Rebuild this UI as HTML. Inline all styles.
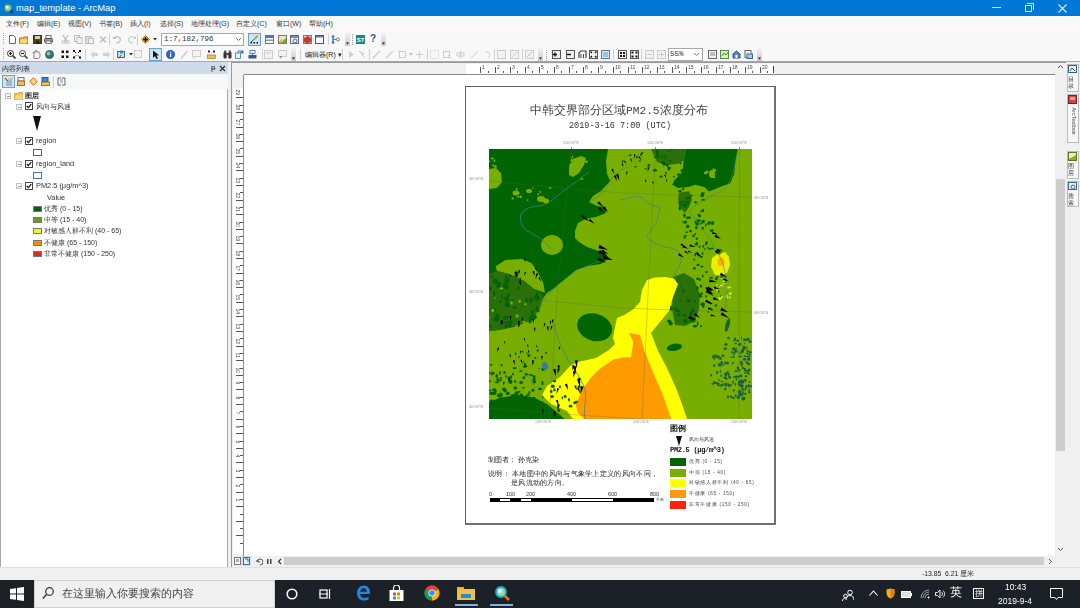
<!DOCTYPE html>
<html><head><meta charset="utf-8"><style>
*{margin:0;padding:0;box-sizing:border-box}
html,body{width:1080px;height:608px;overflow:hidden;background:#f0f0f0;font-family:"Liberation Sans",sans-serif;position:relative}
.a{position:absolute}
.t{white-space:nowrap;line-height:1}
</style></head><body>
<div class="a" style="left:0;top:0;width:1080px;height:608px;overflow:hidden;filter:blur(0.4px)">
<div class="a" style="left:0px;top:0px;width:1080px;height:16px;background:#0078d7"></div>
<svg class="a" style="left:3px;top:3px" width="11" height="11" viewBox="0 0 11 11"><circle cx="5" cy="5" r="4.5" fill="#3b8a6e"/><circle cx="5" cy="5" r="3" fill="#8fd0b0"/><circle cx="4" cy="4" r="1.5" fill="#e8f4ff"/><rect x="7" y="7" width="3" height="4" fill="#1a4d80" transform="rotate(-45 8.5 9)"/></svg>
<div class="a t" style="left:16px;top:3px;color:#fff;font-size:9.4px">map_template - ArcMap</div>
<div class="a" style="left:992px;top:7px;width:9px;height:1px;background:rgba(255,255,255,0.8)"></div>
<div class="a" style="left:1025px;top:5px;width:7px;height:7px;border:1px solid rgba(255,255,255,0.8)"></div>
<div class="a" style="left:1027px;top:3px;width:7px;height:7px;border-top:1px solid rgba(255,255,255,0.8);border-right:1px solid rgba(255,255,255,0.8)"></div>
<svg class="a" style="left:1058px;top:4px" width="9" height="9" viewBox="0 0 9 9"><path d="M0.5 0.5L8.5 8.5M8.5 0.5L0.5 8.5" stroke="rgba(255,255,255,0.85)" stroke-width="1.1"/></svg>
<div class="a" style="left:0px;top:16px;width:1080px;height:15px;background:#f9f9f9"></div>
<div class="a t" style="left:6px;top:20px;font-size:7px;color:#333">文件(F)</div>
<div class="a t" style="left:37px;top:20px;font-size:7px;color:#333">编辑(E)</div>
<div class="a t" style="left:68px;top:20px;font-size:7px;color:#333">视图(V)</div>
<div class="a t" style="left:99px;top:20px;font-size:7px;color:#333">书签(B)</div>
<div class="a t" style="left:130px;top:20px;font-size:7px;color:#333">插入(I)</div>
<div class="a t" style="left:160px;top:20px;font-size:7px;color:#333">选择(S)</div>
<div class="a t" style="left:191px;top:20px;font-size:7px;color:#333">地理处理(G)</div>
<div class="a t" style="left:236px;top:20px;font-size:7px;color:#333">自定义(C)</div>
<div class="a t" style="left:276px;top:20px;font-size:7px;color:#333">窗口(W)</div>
<div class="a t" style="left:309px;top:20px;font-size:7px;color:#333">帮助(H)</div>
<div class="a" style="left:0px;top:31px;width:1080px;height:31px;background:#f8f8f8"></div>
<div class="a" style="left:0px;top:61px;width:1080px;height:1px;background:#a8a8a8"></div>
<div class="a" style="left:3px;top:33px;width:1px;height:1px;background:#a8a8a8"></div>
<div class="a" style="left:3px;top:35px;width:1px;height:1px;background:#a8a8a8"></div>
<div class="a" style="left:3px;top:37px;width:1px;height:1px;background:#a8a8a8"></div>
<div class="a" style="left:3px;top:39px;width:1px;height:1px;background:#a8a8a8"></div>
<div class="a" style="left:3px;top:41px;width:1px;height:1px;background:#a8a8a8"></div>
<div class="a" style="left:3px;top:43px;width:1px;height:1px;background:#a8a8a8"></div>
<div class="a" style="left:3px;top:48px;width:1px;height:1px;background:#a8a8a8"></div>
<div class="a" style="left:3px;top:50px;width:1px;height:1px;background:#a8a8a8"></div>
<div class="a" style="left:3px;top:52px;width:1px;height:1px;background:#a8a8a8"></div>
<div class="a" style="left:3px;top:54px;width:1px;height:1px;background:#a8a8a8"></div>
<div class="a" style="left:3px;top:56px;width:1px;height:1px;background:#a8a8a8"></div>
<div class="a" style="left:3px;top:58px;width:1px;height:1px;background:#a8a8a8"></div>
<svg class="a" style="left:8px;top:35px" width="9" height="9" viewBox="0 0 9 9"><path d="M1.5 0.5H5.5L7.5 2.5V8.5H1.5Z" fill="#fff" stroke="#666"/></svg>
<svg class="a" style="left:19px;top:35px" width="9" height="9" viewBox="0 0 9 9"><path d="M0.5 3H4L5 2H8.5V8.5H0.5Z" fill="#e8c440" stroke="#a07c10"/><path d="M0.5 8.5L2 4.5H9L7.5 8.5Z" fill="#f5dc6a"/></svg>
<svg class="a" style="left:33px;top:35px" width="9" height="9" viewBox="0 0 9 9"><rect x="0.5" y="0.5" width="8" height="8" fill="#5a4a20" stroke="#3a3010"/><rect x="2" y="1" width="5" height="3" fill="#d8d0a0"/><rect x="3" y="5.5" width="3" height="3" fill="#222"/></svg>
<svg class="a" style="left:44px;top:35px" width="9" height="9" viewBox="0 0 9 9"><rect x="2" y="0.5" width="5" height="3" fill="#fff" stroke="#777"/><rect x="0.5" y="3.5" width="8" height="4" rx="1" fill="#9a9a9a" stroke="#555"/><rect x="2" y="6" width="5" height="2.5" fill="#fff" stroke="#777"/></svg>
<svg class="a" style="left:61px;top:35px" width="9" height="9" viewBox="0 0 9 9"><path d="M2 0L5 6M7 0L4 6" stroke="#bbb" stroke-width="1.2"/><circle cx="2.5" cy="7" r="1.5" fill="none" stroke="#bbb"/><circle cx="6.5" cy="7" r="1.5" fill="none" stroke="#bbb"/></svg>
<svg class="a" style="left:74px;top:35px" width="9" height="9" viewBox="0 0 9 9"><rect x="0.5" y="0.5" width="5" height="6" fill="#f4f4f4" stroke="#bbb"/><rect x="3" y="2.5" width="5" height="6" fill="#f4f4f4" stroke="#bbb"/></svg>
<svg class="a" style="left:85px;top:35px" width="9" height="9" viewBox="0 0 9 9"><rect x="0.5" y="1.5" width="6" height="7" fill="#ddd" stroke="#bbb"/><rect x="3.5" y="3.5" width="5" height="5" fill="#f4f4f4" stroke="#bbb"/></svg>
<svg class="a" style="left:99px;top:35px" width="9" height="9" viewBox="0 0 9 9"><path d="M1 1.5L7 7.5M7 1.5L1 7.5" stroke="#bbb" stroke-width="1.3"/></svg>
<div class="a" style="left:109px;top:34px;width:1px;height:11px;background:#d0d0d0"></div>
<svg class="a" style="left:113px;top:35px" width="9" height="9" viewBox="0 0 9 9"><path d="M1.5 3.5A3 3 0 1 1 3 7.5" fill="none" stroke="#bbb" stroke-width="1.2"/><path d="M0 1L3 4H0Z" fill="#bbb"/></svg>
<svg class="a" style="left:127px;top:35px" width="9" height="9" viewBox="0 0 9 9"><path d="M7.5 3.5A3 3 0 1 0 6 7.5" fill="none" stroke="#ccc" stroke-width="1.2"/><path d="M9 1L6 4H9Z" fill="#ccc"/></svg>
<div class="a" style="left:137px;top:34px;width:1px;height:11px;background:#d0d0d0"></div>
<svg class="a" style="left:141px;top:35px" width="9" height="9" viewBox="0 0 9 9"><path d="M4.5 0.5L8.5 4.5L4.5 8.5L0.5 4.5Z" fill="#e8c060" stroke="#b08830"/><path d="M4.5 2V7M2 4.5H7" stroke="#111" stroke-width="1.6"/></svg>
<svg class="a" style="left:153px;top:38px" width="4" height="3" viewBox="0 0 4 3"><path d="M0 0H4L2 2.5Z" fill="#333"/></svg>
<div class="a" style="left:161px;top:33px;width:83px;height:13px;background:#fff;border:1px solid #a8a8a8"></div>
<div class="a t" style="left:164px;top:36px;font-family:'Liberation Mono',monospace;font-size:7.5px;color:#333">1:7,182,796</div>
<svg class="a" style="left:235px;top:37px" width="7" height="5" viewBox="0 0 7 5"><path d="M1 1L3.5 3.5L6 1" fill="none" stroke="#777"/></svg>
<div class="a" style="left:248px;top:33px;width:13px;height:13px;background:#cde4f7;border:1px solid #62a3e0"></div>
<svg class="a" style="left:250px;top:35px" width="9" height="9" viewBox="0 0 9 9"><path d="M1 7L8 1" stroke="#2a7a2a" stroke-width="1"/><path d="M5 2L8 0.5" stroke="#e8b040" stroke-width="1.5"/><rect x="0.5" y="7" width="1.5" height="1.5" fill="#111"/><rect x="3.5" y="7" width="1.5" height="1.5" fill="#111"/><rect x="6.5" y="7" width="1.5" height="1.5" fill="#111"/></svg>
<svg class="a" style="left:265px;top:35px" width="9" height="9" viewBox="0 0 9 9"><rect x="0.5" y="0.5" width="8" height="8" fill="#fff" stroke="#5577aa"/><rect x="1" y="1" width="7" height="2" fill="#4a78b8"/><rect x="1" y="4.5" width="7" height="1.5" fill="#7a9ac8"/></svg>
<svg class="a" style="left:278px;top:35px" width="9" height="9" viewBox="0 0 9 9"><rect x="0.5" y="0.5" width="8" height="8" fill="#e8e8c0" stroke="#777"/><path d="M2 8L8 3V8Z" fill="#7ab020"/><path d="M1 8L4 4" stroke="#c0a020"/></svg>
<svg class="a" style="left:290px;top:35px" width="9" height="9" viewBox="0 0 9 9"><rect x="0.5" y="0.5" width="8" height="8" fill="#eef" stroke="#667"/><rect x="1" y="1" width="7" height="2" fill="#889"/><circle cx="5" cy="6" r="2" fill="none" stroke="#3a7aa0"/></svg>
<svg class="a" style="left:303px;top:35px" width="9" height="9" viewBox="0 0 9 9"><rect x="0.5" y="0.5" width="8" height="8" fill="#e8d0d0" stroke="#777"/><path d="M1 3L5 1L8 3V7L4 8.5L1 7Z" fill="#c83a30"/></svg>
<svg class="a" style="left:315px;top:35px" width="9" height="9" viewBox="0 0 9 9"><rect x="0.5" y="0.5" width="8" height="8" fill="#fff" stroke="#3a5a8a"/><rect x="1" y="1" width="7" height="1.5" fill="#5a7ab0"/></svg>
<div class="a" style="left:328px;top:34px;width:1px;height:11px;background:#d0d0d0"></div>
<svg class="a" style="left:331px;top:35px" width="9" height="9" viewBox="0 0 9 9"><path d="M2 0.5V8.5" stroke="#3a7ad0" stroke-width="1.5"/><path d="M2 4.5H6" stroke="#777"/><circle cx="7" cy="4.5" r="1.5" fill="none" stroke="#777"/><circle cx="2" cy="1.5" r="1.3" fill="#3a7ad0"/><circle cx="2" cy="7.5" r="1.3" fill="#3a7ad0"/></svg>
<div class="a" style="left:345px;top:33px;width:5px;height:13px;background:linear-gradient(#f4f4f4,#c8c8c8)"></div>
<svg class="a" style="left:345px;top:42px" width="5" height="3" viewBox="0 0 5 3"><path d="M1 0.5L4 0.5L2.5 2.5Z" fill="#222"/></svg>
<div class="a" style="left:352px;top:34px;width:1px;height:1px;background:#999"></div>
<div class="a" style="left:352px;top:36px;width:1px;height:1px;background:#999"></div>
<div class="a" style="left:352px;top:38px;width:1px;height:1px;background:#999"></div>
<div class="a" style="left:352px;top:40px;width:1px;height:1px;background:#999"></div>
<div class="a" style="left:352px;top:42px;width:1px;height:1px;background:#999"></div>
<div class="a" style="left:352px;top:44px;width:1px;height:1px;background:#999"></div>
<svg class="a" style="left:356px;top:35px" width="9" height="9" viewBox="0 0 9 9"><rect x="0" y="0" width="9" height="9" fill="#128a8a"/><text x="4.5" y="7" font-size="6" font-family="Liberation Sans" font-weight="bold" fill="#fff" text-anchor="middle">ST</text></svg>
<div class="a t" style="left:370px;top:34px;font-size:10px;font-weight:bold;color:#2a5aa0">?</div>
<div class="a" style="left:381px;top:33px;width:5px;height:13px;background:linear-gradient(#f4f4f4,#c8c8c8)"></div>
<svg class="a" style="left:381px;top:42px" width="5" height="3" viewBox="0 0 5 3"><path d="M1 0.5L4 0.5L2.5 2.5Z" fill="#222"/></svg>
<svg class="a" style="left:7px;top:50px" width="9" height="9" viewBox="0 0 9 9"><circle cx="3.5" cy="3.5" r="3" fill="#fff" stroke="#333"/><path d="M2 3.5H5M3.5 2V5" stroke="#111"/><path d="M5.5 5.5L8.5 8.5" stroke="#333" stroke-width="1.6"/></svg>
<svg class="a" style="left:19px;top:50px" width="9" height="9" viewBox="0 0 9 9"><circle cx="3.5" cy="3.5" r="3" fill="#fff" stroke="#444"/><path d="M2 3.5H5" stroke="#111"/><path d="M5.5 5.5L8.5 8.5" stroke="#444" stroke-width="1.6"/></svg>
<svg class="a" style="left:32px;top:50px" width="9" height="9" viewBox="0 0 9 9"><path d="M2 8.5V4L1 2.5L2 2L3 3V1L4 0.5L5 1V2.5L6 1.5L7 2L8 4V7L6.5 8.5Z" fill="#f4f4f4" stroke="#666" stroke-width="0.8"/></svg>
<svg class="a" style="left:45px;top:50px" width="9" height="9" viewBox="0 0 9 9"><circle cx="4.5" cy="4.5" r="4" fill="#3a7a50"/><circle cx="3.5" cy="3.5" r="2" fill="#7ac0e0"/><circle cx="4.5" cy="4.5" r="4" fill="none" stroke="#2a5070" stroke-width="0.8"/></svg>
<svg class="a" style="left:61px;top:50px" width="9" height="9" viewBox="0 0 9 9"><rect x="0.5" y="0.5" width="2.5" height="2.5" fill="#111"/><rect x="5" y="0.5" width="2.5" height="2.5" fill="#111"/><rect x="0.5" y="5.5" width="2.5" height="2.5" fill="#111"/><rect x="5" y="5.5" width="2.5" height="2.5" fill="#111"/></svg>
<svg class="a" style="left:73px;top:50px" width="9" height="9" viewBox="0 0 9 9"><rect x="0" y="0" width="2" height="2" fill="#111"/><rect x="6" y="0" width="2" height="2" fill="#111"/><rect x="0" y="6.5" width="2" height="2" fill="#111"/><rect x="6" y="6.5" width="2" height="2" fill="#111"/><path d="M2 2L3 3M6 2L5 3M2 6.5L3 5.5M6 6.5L5 5.5" stroke="#111"/></svg>
<div class="a" style="left:85px;top:49px;width:1px;height:11px;background:#d0d0d0"></div>
<svg class="a" style="left:90px;top:50px" width="9" height="9" viewBox="0 0 9 9"><path d="M0.5 4.5L4 1V3H8V6H4V8Z" fill="#d0d4d8"/></svg>
<svg class="a" style="left:102px;top:50px" width="9" height="9" viewBox="0 0 9 9"><path d="M8.5 4.5L5 1V3H1V6H5V8Z" fill="#d0d4d8"/></svg>
<div class="a" style="left:113px;top:49px;width:1px;height:11px;background:#d0d0d0"></div>
<svg class="a" style="left:117px;top:50px" width="9" height="9" viewBox="0 0 9 9"><rect x="0.5" y="1.5" width="7" height="6" fill="#cfe0ee" stroke="#3a6a9a"/><rect x="3" y="0.5" width="3" height="3" fill="#3a8ab0"/><path d="M2 8.5L4 5" stroke="#555"/></svg>
<svg class="a" style="left:129px;top:53px" width="4" height="3" viewBox="0 0 4 3"><path d="M0 0H4L2 2.5Z" fill="#333"/></svg>
<svg class="a" style="left:134px;top:50px" width="9" height="9" viewBox="0 0 9 9"><rect x="0.5" y="0.5" width="7" height="7" fill="#f2f2f2" stroke="#ccc"/></svg>
<div class="a" style="left:149px;top:48px;width:13px;height:13px;background:#cde4f7;border:1px solid #62a3e0"></div>
<svg class="a" style="left:151px;top:50px" width="9" height="9" viewBox="0 0 9 9"><path d="M2 0.5L2 8L4 6L5.5 9L7 8.3L5.5 5.5L8 5.2Z" fill="#111"/></svg>
<svg class="a" style="left:166px;top:50px" width="9" height="9" viewBox="0 0 9 9"><circle cx="4.5" cy="4.5" r="4.2" fill="#2a6ad0"/><circle cx="4.5" cy="4.5" r="4.2" fill="none" stroke="#1a4a90" stroke-width="0.6"/><rect x="4" y="3.5" width="1.2" height="3.5" fill="#fff"/><rect x="4" y="1.8" width="1.2" height="1" fill="#fff"/></svg>
<svg class="a" style="left:180px;top:50px" width="9" height="9" viewBox="0 0 9 9"><path d="M1 8.5L7.5 1" stroke="#ccc" stroke-width="1.5"/></svg>
<svg class="a" style="left:192px;top:50px" width="9" height="9" viewBox="0 0 9 9"><rect x="0.5" y="0.5" width="8" height="6" fill="#f4f4f4" stroke="#ccc"/><path d="M2 6.5V8.5L4 6.5" fill="#f4f4f4" stroke="#ccc"/></svg>
<svg class="a" style="left:207px;top:50px" width="9" height="9" viewBox="0 0 9 9"><rect x="0.5" y="5" width="8" height="3.5" fill="#f0c040" stroke="#8a6a10" stroke-width="0.6"/><rect x="1" y="0.5" width="2" height="2" fill="#224"/><rect x="6" y="0.5" width="2" height="2" fill="#224"/></svg>
<svg class="a" style="left:223px;top:50px" width="9" height="9" viewBox="0 0 9 9"><rect x="0.5" y="2" width="3.2" height="6.5" rx="1" fill="#333"/><rect x="5.3" y="2" width="3.2" height="6.5" rx="1" fill="#333"/><rect x="1" y="0.5" width="2.2" height="2" fill="#555"/><rect x="5.8" y="0.5" width="2.2" height="2" fill="#555"/><rect x="3.5" y="3" width="2" height="2" fill="#333"/></svg>
<svg class="a" style="left:235px;top:50px" width="9" height="9" viewBox="0 0 9 9"><rect x="0.5" y="3" width="5" height="5.5" fill="#e8f0f8" stroke="#3a7ab0" stroke-width="0.8"/><rect x="5.5" y="0.5" width="3" height="3" fill="#3a7ab0"/><path d="M3 3V1H5.5" fill="none" stroke="#3a7ab0"/></svg>
<svg class="a" style="left:248px;top:50px" width="9" height="9" viewBox="0 0 9 9"><rect x="2" y="0.5" width="5" height="3" fill="#e8f0f8" stroke="#3a6ab0" stroke-width="0.8"/><path d="M4.5 3.5V5" stroke="#666"/><rect x="0.5" y="5" width="8" height="3.5" fill="#2a5aa0"/></svg>
<div class="a" style="left:262px;top:49px;width:1px;height:11px;background:#d0d0d0"></div>
<svg class="a" style="left:264px;top:50px" width="9" height="9" viewBox="0 0 9 9"><rect x="0.5" y="0.5" width="8" height="8" fill="#f2f2f2" stroke="#ccc"/><rect x="2" y="2" width="5" height="2" fill="#ddd"/></svg>
<svg class="a" style="left:278px;top:50px" width="9" height="9" viewBox="0 0 9 9"><rect x="0.5" y="0.5" width="8" height="6" fill="#f2f2f2" stroke="#ccc"/><path d="M2 6.5V8.5L4 6.5" stroke="#ccc"/></svg>
<div class="a" style="left:291px;top:48px;width:5px;height:13px;background:linear-gradient(#f4f4f4,#c8c8c8)"></div>
<svg class="a" style="left:291px;top:57px" width="5" height="3" viewBox="0 0 5 3"><path d="M1 0.5L4 0.5L2.5 2.5Z" fill="#222"/></svg>
<div class="a" style="left:300px;top:49px;width:1px;height:11px;background:#d0d0d0"></div>
<div class="a t" style="left:305px;top:51px;font-size:7px;color:#222">编辑器(R) ▾</div>
<div class="a" style="left:342px;top:49px;width:1px;height:11px;background:#d0d0d0"></div>
<svg class="a" style="left:347px;top:50px" width="9" height="9" viewBox="0 0 9 9"><path d="M2 1L7 4.5L2 8Z" fill="#cfcfcf"/></svg>
<svg class="a" style="left:358px;top:50px" width="9" height="9" viewBox="0 0 9 9"><path d="M1 1L6 4L4 5L7 8" fill="#cfcfcf" stroke="#cfcfcf"/></svg>
<div class="a" style="left:369px;top:49px;width:1px;height:11px;background:#d0d0d0"></div>
<svg class="a" style="left:372px;top:50px" width="9" height="9" viewBox="0 0 9 9"><path d="M1 8L8 1" stroke="#ccc" stroke-width="1.2"/><circle cx="1.5" cy="7.5" r="1" fill="#ccc"/></svg>
<svg class="a" style="left:385px;top:50px" width="9" height="9" viewBox="0 0 9 9"><path d="M1 8L8 1" stroke="#ccc" stroke-width="1.2"/></svg>
<svg class="a" style="left:398px;top:50px" width="9" height="9" viewBox="0 0 9 9"><rect x="1.5" y="1.5" width="6" height="6" fill="none" stroke="#ccc"/><circle cx="1.5" cy="1.5" r="1" fill="#ccc"/></svg>
<svg class="a" style="left:409px;top:53px" width="4" height="3" viewBox="0 0 4 3"><path d="M0 0H4L2 2.5Z" fill="#bbb"/></svg>
<svg class="a" style="left:415px;top:50px" width="9" height="9" viewBox="0 0 9 9"><path d="M1 4.5H8M4.5 1V8" stroke="#ccc"/></svg>
<div class="a" style="left:427px;top:49px;width:1px;height:11px;background:#d0d0d0"></div>
<svg class="a" style="left:430px;top:50px" width="9" height="9" viewBox="0 0 9 9"><rect x="0.5" y="0.5" width="8" height="8" fill="none" stroke="#ccc" stroke-dasharray="1 1"/></svg>
<svg class="a" style="left:443px;top:50px" width="9" height="9" viewBox="0 0 9 9"><rect x="0.5" y="1.5" width="6" height="6" fill="none" stroke="#ccc"/><path d="M5 5L8.5 8.5" stroke="#ccc"/></svg>
<svg class="a" style="left:456px;top:50px" width="9" height="9" viewBox="0 0 9 9"><path d="M4.5 0.5V8.5M1 3H8V6H1Z" fill="none" stroke="#ccc"/></svg>
<svg class="a" style="left:470px;top:50px" width="9" height="9" viewBox="0 0 9 9"><path d="M1 8L8 1" stroke="#ccc"/></svg>
<svg class="a" style="left:483px;top:50px" width="9" height="9" viewBox="0 0 9 9"><path d="M2 2A3 3 0 1 1 5 8" fill="none" stroke="#ccc"/></svg>
<div class="a" style="left:494px;top:49px;width:1px;height:11px;background:#d0d0d0"></div>
<svg class="a" style="left:497px;top:50px" width="9" height="9" viewBox="0 0 9 9"><rect x="0.5" y="0.5" width="8" height="8" fill="#f2f2f2" stroke="#ccc"/></svg>
<svg class="a" style="left:510px;top:50px" width="9" height="9" viewBox="0 0 9 9"><rect x="0.5" y="0.5" width="8" height="8" fill="#f2f2f2" stroke="#ccc"/><path d="M2 7L7 2" stroke="#ccc"/></svg>
<div class="a" style="left:522px;top:49px;width:1px;height:11px;background:#d0d0d0"></div>
<svg class="a" style="left:525px;top:50px" width="9" height="9" viewBox="0 0 9 9"><rect x="0.5" y="0.5" width="8" height="8" fill="#f2f2f2" stroke="#ccc"/><path d="M2 7L7 2" stroke="#bbb"/></svg>
<div class="a" style="left:538px;top:48px;width:5px;height:13px;background:linear-gradient(#f4f4f4,#c8c8c8)"></div>
<svg class="a" style="left:538px;top:57px" width="5" height="3" viewBox="0 0 5 3"><path d="M1 0.5L4 0.5L2.5 2.5Z" fill="#222"/></svg>
<div class="a" style="left:546px;top:50px;width:1px;height:1px;background:#999"></div>
<div class="a" style="left:546px;top:52px;width:1px;height:1px;background:#999"></div>
<div class="a" style="left:546px;top:54px;width:1px;height:1px;background:#999"></div>
<div class="a" style="left:546px;top:56px;width:1px;height:1px;background:#999"></div>
<div class="a" style="left:546px;top:58px;width:1px;height:1px;background:#999"></div>
<div class="a" style="left:546px;top:60px;width:1px;height:1px;background:#999"></div>
<svg class="a" style="left:552px;top:50px" width="9" height="9" viewBox="0 0 9 9"><rect x="0.5" y="0.5" width="8" height="8" fill="#eee" stroke="#555"/><path d="M1 4.5H5M3 2.5V6.5" stroke="#111" stroke-width="1.4"/></svg>
<svg class="a" style="left:566px;top:50px" width="9" height="9" viewBox="0 0 9 9"><rect x="0.5" y="0.5" width="8" height="8" fill="#eee" stroke="#555"/><path d="M1 4.5H5" stroke="#111" stroke-width="1.4"/></svg>
<svg class="a" style="left:578px;top:50px" width="9" height="9" viewBox="0 0 9 9"><path d="M1 8V3L3 1H8V8" fill="none" stroke="#444" stroke-width="1.2"/><path d="M3 4V8M5.5 4V8" stroke="#444"/></svg>
<svg class="a" style="left:589px;top:50px" width="9" height="9" viewBox="0 0 9 9"><rect x="0.5" y="0.5" width="8" height="8" fill="#f4f4f4" stroke="#555"/><path d="M1.5 1.5L3 3M7.5 1.5L6 3M1.5 7.5L3 6M7.5 7.5L6 6" stroke="#111" stroke-width="1.3"/></svg>
<svg class="a" style="left:601px;top:50px" width="9" height="9" viewBox="0 0 9 9"><rect x="0.5" y="0.5" width="8" height="8" fill="#dde8f4" stroke="#5a7aa0"/><rect x="2" y="2" width="5" height="5" fill="#a0c0e0"/></svg>
<div class="a" style="left:613px;top:49px;width:1px;height:11px;background:#d0d0d0"></div>
<svg class="a" style="left:618px;top:50px" width="9" height="9" viewBox="0 0 9 9"><rect x="0.5" y="0.5" width="8" height="8" fill="#f4f4f4" stroke="#555"/><rect x="2" y="2" width="2" height="2" fill="#111"/><rect x="5" y="2" width="2" height="2" fill="#111"/><rect x="2" y="5" width="2" height="2" fill="#111"/><rect x="5" y="5" width="2" height="2" fill="#111"/></svg>
<svg class="a" style="left:630px;top:50px" width="9" height="9" viewBox="0 0 9 9"><rect x="0.5" y="0.5" width="8" height="8" fill="#f4f4f4" stroke="#555"/><rect x="1.5" y="1.5" width="2" height="2" fill="#111"/><rect x="5.5" y="1.5" width="2" height="2" fill="#111"/><rect x="1.5" y="5.5" width="2" height="2" fill="#111"/><rect x="5.5" y="5.5" width="2" height="2" fill="#111"/></svg>
<div class="a" style="left:641px;top:49px;width:1px;height:11px;background:#d0d0d0"></div>
<svg class="a" style="left:645px;top:50px" width="9" height="9" viewBox="0 0 9 9"><rect x="0.5" y="0.5" width="8" height="8" fill="#f2f2f2" stroke="#ccc"/><path d="M2 4.5H7" stroke="#ccc"/></svg>
<svg class="a" style="left:657px;top:50px" width="9" height="9" viewBox="0 0 9 9"><rect x="0.5" y="0.5" width="8" height="8" fill="#f2f2f2" stroke="#ccc"/><path d="M2 4.5H7M4.5 2V7" stroke="#ccc"/></svg>
<div class="a" style="left:668px;top:48px;width:35px;height:13px;background:#fff;border:1px solid #a8a8a8"></div>
<div class="a t" style="left:670px;top:51px;font-family:'Liberation Mono',monospace;font-size:7.5px;color:#333">55%</div>
<svg class="a" style="left:693px;top:52px" width="7" height="5" viewBox="0 0 7 5"><path d="M1 1L3.5 3.5L6 1" fill="none" stroke="#777"/></svg>
<svg class="a" style="left:708px;top:50px" width="9" height="9" viewBox="0 0 9 9"><rect x="0.5" y="0.5" width="8" height="8" fill="#f4f4f4" stroke="#666"/><path d="M2 3H7M2 5H7" stroke="#888"/></svg>
<svg class="a" style="left:720px;top:50px" width="9" height="9" viewBox="0 0 9 9"><rect x="0.5" y="0.5" width="8" height="8" fill="#d8ecd0" stroke="#5a8a4a"/><path d="M2 6L4 3L6 5L8 2" stroke="#3a8a2a" fill="none"/></svg>
<svg class="a" style="left:732px;top:50px" width="9" height="9" viewBox="0 0 9 9"><path d="M1 8V4L4.5 1L8 4V8Z" fill="#5a8ac0" stroke="#2a4a80"/><rect x="3.5" y="5" width="2" height="3" fill="#fff"/></svg>
<svg class="a" style="left:744px;top:50px" width="9" height="9" viewBox="0 0 9 9"><rect x="1" y="0.5" width="6" height="7" fill="#f4f4f4" stroke="#666"/><rect x="3" y="4" width="5.5" height="4.5" fill="#a8c8e8" stroke="#3a6aa0"/></svg>
<div class="a" style="left:757px;top:48px;width:5px;height:13px;background:linear-gradient(#f4f4f4,#c8c8c8)"></div>
<svg class="a" style="left:757px;top:57px" width="5" height="3" viewBox="0 0 5 3"><path d="M1 0.5L4 0.5L2.5 2.5Z" fill="#222"/></svg>
<div class="a" style="left:0px;top:62px;width:228px;height:12px;background:#cfdbea"></div>
<div class="a t" style="left:2px;top:65px;font-size:7px;color:#222">内容列表</div>
<div class="a t" style="left:211px;top:64px;font-size:8px;color:#333">ᵽ</div>
<svg class="a" style="left:219px;top:65px" width="7" height="7" viewBox="0 0 7 7"><path d="M1 1L6 6M6 1L1 6" stroke="#333" stroke-width="1.2"/></svg>
<div class="a" style="left:0px;top:74px;width:228px;height:15px;background:#f7f8f9"></div>
<div class="a" style="left:2px;top:75px;width:13px;height:13px;background:#cde4f7;border:1px solid #62a3e0"></div>
<svg class="a" style="left:4px;top:77px" width="9" height="9" viewBox="0 0 9 9"><path d="M0 2H3M4 2H9" stroke="#e0b040"/><path d="M2 4H8M2 6H8M2 8H8" stroke="#888"/><path d="M1 1L4 4" stroke="#444"/></svg>
<svg class="a" style="left:17px;top:77px" width="9" height="9" viewBox="0 0 9 9"><rect x="1" y="0.5" width="6" height="3.5" fill="#f4f4f4" stroke="#777"/><rect x="0.5" y="4" width="7" height="4.5" fill="#e8c060" stroke="#a07820"/></svg>
<svg class="a" style="left:29px;top:77px" width="9" height="9" viewBox="0 0 9 9"><path d="M4.5 0.5L8.5 4.5L4.5 8.5L0.5 4.5Z" fill="#f0c060" stroke="#c09040"/><path d="M4.5 2.5L6.5 4.5L4.5 6.5L2.5 4.5Z" fill="#f8e0a0"/></svg>
<svg class="a" style="left:41px;top:77px" width="9" height="9" viewBox="0 0 9 9"><rect x="1" y="0.5" width="6" height="4" fill="#3a8ad0" stroke="#2a5a90"/><rect x="0.5" y="5" width="8" height="3.5" fill="#e8c060" stroke="#a07820"/></svg>
<div class="a" style="left:53px;top:76px;width:1px;height:12px;background:#d0d0d0"></div>
<svg class="a" style="left:57px;top:77px" width="9" height="9" viewBox="0 0 9 9"><path d="M1 1H4M1 1V8M1 8H4M8 1H5M8 1V8M8 8H5" fill="none" stroke="#666"/><path d="M3 3H6M3 5H6" stroke="#888"/></svg>
<div class="a" style="left:0;top:89px;width:228px;height:479px;background:#fff;border:1px solid #a9a9a9;border-top:0"></div>
<div class="a" style="left:5px;top:93px;width:6px;height:6px;border:1px solid #c0c0c0;background:#fafafa"></div>
<div class="a" style="left:6.5px;top:95.5px;width:3px;height:1px;background:#999"></div>
<svg class="a" style="left:14px;top:91px" width="9" height="9" viewBox="0 0 9 9"><path d="M0.5 2.5H3.5L4.5 1.5H8.5V8.5H0.5Z" fill="#f2c250" stroke="#d09a30" stroke-width="0.8"/><path d="M1 8.5L2 4H9L8 8.5Z" fill="#f8d878"/></svg>
<div class="a t" style="left:25px;top:92px;font-size:7px;color:#222;font-weight:bold">图层</div>
<div class="a" style="left:16px;top:104px;width:6px;height:6px;border:1px solid #c0c0c0;background:#fafafa"></div>
<div class="a" style="left:17.5px;top:106.5px;width:3px;height:1px;background:#999"></div>
<div class="a" style="left:25px;top:102px;width:8px;height:8px;border:1px solid #444;background:#fff"></div>
<svg class="a" style="left:25px;top:102px" width="8" height="8" viewBox="0 0 8 8"><path d="M1.8 4L3.3 5.6L6.3 2.2" fill="none" stroke="#111" stroke-width="1.2"/></svg>
<div class="a t" style="left:36px;top:103px;font-size:7px;color:#333">风向与风速</div>
<svg class="a" style="left:33px;top:116px" width="8" height="15" viewBox="0 0 8 15"><path d="M0 0H8L4 15Z" fill="#111"/></svg>
<div class="a" style="left:16px;top:138px;width:6px;height:6px;border:1px solid #c0c0c0;background:#fafafa"></div>
<div class="a" style="left:17.5px;top:140.5px;width:3px;height:1px;background:#999"></div>
<div class="a" style="left:25px;top:137px;width:8px;height:8px;border:1px solid #444;background:#fff"></div>
<svg class="a" style="left:25px;top:137px" width="8" height="8" viewBox="0 0 8 8"><path d="M1.8 4L3.3 5.6L6.3 2.2" fill="none" stroke="#111" stroke-width="1.2"/></svg>
<div class="a t" style="left:36px;top:137px;font-size:7.3px;color:#333">region</div>
<div class="a" style="left:33px;top:149px;width:9px;height:7px;border:1.5px solid #e03040;background:#fff"></div>
<div class="a" style="left:16px;top:161px;width:6px;height:6px;border:1px solid #c0c0c0;background:#fafafa"></div>
<div class="a" style="left:17.5px;top:163.5px;width:3px;height:1px;background:#999"></div>
<div class="a" style="left:25px;top:160px;width:8px;height:8px;border:1px solid #444;background:#fff"></div>
<svg class="a" style="left:25px;top:160px" width="8" height="8" viewBox="0 0 8 8"><path d="M1.8 4L3.3 5.6L6.3 2.2" fill="none" stroke="#111" stroke-width="1.2"/></svg>
<div class="a t" style="left:36px;top:160px;font-size:7.3px;color:#333">region_land</div>
<div class="a" style="left:33px;top:172px;width:9px;height:7px;border:1.5px solid #3a70d0;background:#fff"></div>
<div class="a" style="left:16px;top:183px;width:6px;height:6px;border:1px solid #c0c0c0;background:#fafafa"></div>
<div class="a" style="left:17.5px;top:185.5px;width:3px;height:1px;background:#999"></div>
<div class="a" style="left:25px;top:182px;width:8px;height:8px;border:1px solid #444;background:#fff"></div>
<svg class="a" style="left:25px;top:182px" width="8" height="8" viewBox="0 0 8 8"><path d="M1.8 4L3.3 5.6L6.3 2.2" fill="none" stroke="#111" stroke-width="1.2"/></svg>
<div class="a t" style="left:36px;top:182px;font-size:7.4px;color:#333">PM2.5 (μg/m^3)</div>
<div class="a t" style="left:47px;top:194px;font-size:7.3px;color:#333">Value</div>
<div class="a" style="left:33px;top:206.0px;width:9px;height:6px;background:#0d5e0d;border:1px solid #777"></div>
<div class="a t" style="left:44px;top:205.0px;font-size:7px;color:#333">优秀 (0 - 15)</div>
<div class="a" style="left:33px;top:217.2px;width:9px;height:6px;background:#6a9e1a;border:1px solid #777"></div>
<div class="a t" style="left:44px;top:216.2px;font-size:7px;color:#333">中等 (15 - 40)</div>
<div class="a" style="left:33px;top:228.4px;width:9px;height:6px;background:#f4f420;border:1px solid #777"></div>
<div class="a t" style="left:44px;top:227.4px;font-size:7px;color:#333">对敏感人群不利 (40 - 65)</div>
<div class="a" style="left:33px;top:239.6px;width:9px;height:6px;background:#f08c10;border:1px solid #777"></div>
<div class="a t" style="left:44px;top:238.6px;font-size:7px;color:#333">不健康 (65 - 150)</div>
<div class="a" style="left:33px;top:250.8px;width:9px;height:6px;background:#e02a1a;border:1px solid #777"></div>
<div class="a t" style="left:44px;top:249.8px;font-size:7px;color:#333">非常不健康 (150 - 250)</div>
<div class="a" style="left:231px;top:62px;width:836px;height:505px;background:#f0f0f0;border-left:1px solid #9a9a9a;border-top:1px solid #9a9a9a"></div>
<div class="a" style="left:244px;top:75px;width:811px;height:481px;background:#fff"></div>
<div class="a" style="left:466px;top:64px;width:308px;height:10px;background:#fff"></div>
<div class="a" style="left:244px;top:74px;width:811px;height:1px;background:#8a8a8a"></div>
<div class="a" style="left:480px;top:67px;width:1px;height:6px;background:#555"></div>
<div class="a t" style="left:482px;top:65px;font-size:5px;color:#444">1</div>
<div class="a" style="left:488px;top:71px;width:1px;height:2px;background:#555"></div>
<div class="a" style="left:495px;top:67px;width:1px;height:6px;background:#555"></div>
<div class="a t" style="left:497px;top:65px;font-size:5px;color:#444">2</div>
<div class="a" style="left:503px;top:71px;width:1px;height:2px;background:#555"></div>
<div class="a" style="left:510px;top:67px;width:1px;height:6px;background:#555"></div>
<div class="a t" style="left:512px;top:65px;font-size:5px;color:#444">3</div>
<div class="a" style="left:517px;top:71px;width:1px;height:2px;background:#555"></div>
<div class="a" style="left:525px;top:67px;width:1px;height:6px;background:#555"></div>
<div class="a t" style="left:527px;top:65px;font-size:5px;color:#444">4</div>
<div class="a" style="left:532px;top:71px;width:1px;height:2px;background:#555"></div>
<div class="a" style="left:539px;top:67px;width:1px;height:6px;background:#555"></div>
<div class="a t" style="left:541px;top:65px;font-size:5px;color:#444">5</div>
<div class="a" style="left:547px;top:71px;width:1px;height:2px;background:#555"></div>
<div class="a" style="left:554px;top:67px;width:1px;height:6px;background:#555"></div>
<div class="a t" style="left:556px;top:65px;font-size:5px;color:#444">6</div>
<div class="a" style="left:561px;top:71px;width:1px;height:2px;background:#555"></div>
<div class="a" style="left:569px;top:67px;width:1px;height:6px;background:#555"></div>
<div class="a t" style="left:571px;top:65px;font-size:5px;color:#444">7</div>
<div class="a" style="left:576px;top:71px;width:1px;height:2px;background:#555"></div>
<div class="a" style="left:583px;top:67px;width:1px;height:6px;background:#555"></div>
<div class="a t" style="left:585px;top:65px;font-size:5px;color:#444">8</div>
<div class="a" style="left:591px;top:71px;width:1px;height:2px;background:#555"></div>
<div class="a" style="left:598px;top:67px;width:1px;height:6px;background:#555"></div>
<div class="a t" style="left:600px;top:65px;font-size:5px;color:#444">9</div>
<div class="a" style="left:605px;top:71px;width:1px;height:2px;background:#555"></div>
<div class="a" style="left:613px;top:67px;width:1px;height:6px;background:#555"></div>
<div class="a t" style="left:615px;top:65px;font-size:5px;color:#444">10</div>
<div class="a" style="left:620px;top:71px;width:1px;height:2px;background:#555"></div>
<div class="a" style="left:628px;top:67px;width:1px;height:6px;background:#555"></div>
<div class="a t" style="left:630px;top:65px;font-size:5px;color:#444">11</div>
<div class="a" style="left:635px;top:71px;width:1px;height:2px;background:#555"></div>
<div class="a" style="left:642px;top:67px;width:1px;height:6px;background:#555"></div>
<div class="a t" style="left:644px;top:65px;font-size:5px;color:#444">12</div>
<div class="a" style="left:650px;top:71px;width:1px;height:2px;background:#555"></div>
<div class="a" style="left:657px;top:67px;width:1px;height:6px;background:#555"></div>
<div class="a t" style="left:659px;top:65px;font-size:5px;color:#444">13</div>
<div class="a" style="left:664px;top:71px;width:1px;height:2px;background:#555"></div>
<div class="a" style="left:672px;top:67px;width:1px;height:6px;background:#555"></div>
<div class="a t" style="left:674px;top:65px;font-size:5px;color:#444">14</div>
<div class="a" style="left:679px;top:71px;width:1px;height:2px;background:#555"></div>
<div class="a" style="left:686px;top:67px;width:1px;height:6px;background:#555"></div>
<div class="a t" style="left:688px;top:65px;font-size:5px;color:#444">15</div>
<div class="a" style="left:694px;top:71px;width:1px;height:2px;background:#555"></div>
<div class="a" style="left:701px;top:67px;width:1px;height:6px;background:#555"></div>
<div class="a t" style="left:703px;top:65px;font-size:5px;color:#444">16</div>
<div class="a" style="left:708px;top:71px;width:1px;height:2px;background:#555"></div>
<div class="a" style="left:716px;top:67px;width:1px;height:6px;background:#555"></div>
<div class="a t" style="left:718px;top:65px;font-size:5px;color:#444">17</div>
<div class="a" style="left:723px;top:71px;width:1px;height:2px;background:#555"></div>
<div class="a" style="left:730px;top:67px;width:1px;height:6px;background:#555"></div>
<div class="a t" style="left:732px;top:65px;font-size:5px;color:#444">18</div>
<div class="a" style="left:738px;top:71px;width:1px;height:2px;background:#555"></div>
<div class="a" style="left:745px;top:67px;width:1px;height:6px;background:#555"></div>
<div class="a t" style="left:747px;top:65px;font-size:5px;color:#444">19</div>
<div class="a" style="left:752px;top:71px;width:1px;height:2px;background:#555"></div>
<div class="a" style="left:760px;top:67px;width:1px;height:6px;background:#555"></div>
<div class="a t" style="left:762px;top:65px;font-size:5px;color:#444">20</div>
<div class="a" style="left:767px;top:71px;width:1px;height:2px;background:#555"></div>
<div class="a" style="left:773px;top:66px;width:1px;height:7px;background:#444"></div>
<div class="a" style="left:233px;top:88px;width:10px;height:466px;background:#fff"></div>
<div class="a" style="left:243px;top:75px;width:1px;height:481px;background:#8a8a8a"></div>
<div class="a" style="left:236px;top:97px;width:7px;height:1px;background:#555"></div>
<div class="a t" style="left:233px;top:89px;width:6px;height:7px;font-size:5px;color:#444;transform:rotate(90deg);transform-origin:center">29</div>
<div class="a" style="left:240px;top:105px;width:3px;height:1px;background:#555"></div>
<div class="a" style="left:236px;top:112px;width:7px;height:1px;background:#555"></div>
<div class="a t" style="left:233px;top:104px;width:6px;height:7px;font-size:5px;color:#444;transform:rotate(90deg);transform-origin:center">28</div>
<div class="a" style="left:240px;top:119px;width:3px;height:1px;background:#555"></div>
<div class="a" style="left:236px;top:127px;width:7px;height:1px;background:#555"></div>
<div class="a t" style="left:233px;top:119px;width:6px;height:7px;font-size:5px;color:#444;transform:rotate(90deg);transform-origin:center">27</div>
<div class="a" style="left:240px;top:134px;width:3px;height:1px;background:#555"></div>
<div class="a" style="left:236px;top:141px;width:7px;height:1px;background:#555"></div>
<div class="a t" style="left:233px;top:133px;width:6px;height:7px;font-size:5px;color:#444;transform:rotate(90deg);transform-origin:center">26</div>
<div class="a" style="left:240px;top:148px;width:3px;height:1px;background:#555"></div>
<div class="a" style="left:236px;top:156px;width:7px;height:1px;background:#555"></div>
<div class="a t" style="left:233px;top:148px;width:6px;height:7px;font-size:5px;color:#444;transform:rotate(90deg);transform-origin:center">25</div>
<div class="a" style="left:240px;top:163px;width:3px;height:1px;background:#555"></div>
<div class="a" style="left:236px;top:170px;width:7px;height:1px;background:#555"></div>
<div class="a t" style="left:233px;top:162px;width:6px;height:7px;font-size:5px;color:#444;transform:rotate(90deg);transform-origin:center">24</div>
<div class="a" style="left:240px;top:178px;width:3px;height:1px;background:#555"></div>
<div class="a" style="left:236px;top:185px;width:7px;height:1px;background:#555"></div>
<div class="a t" style="left:233px;top:177px;width:6px;height:7px;font-size:5px;color:#444;transform:rotate(90deg);transform-origin:center">23</div>
<div class="a" style="left:240px;top:192px;width:3px;height:1px;background:#555"></div>
<div class="a" style="left:236px;top:200px;width:7px;height:1px;background:#555"></div>
<div class="a t" style="left:233px;top:192px;width:6px;height:7px;font-size:5px;color:#444;transform:rotate(90deg);transform-origin:center">22</div>
<div class="a" style="left:240px;top:207px;width:3px;height:1px;background:#555"></div>
<div class="a" style="left:236px;top:214px;width:7px;height:1px;background:#555"></div>
<div class="a t" style="left:233px;top:206px;width:6px;height:7px;font-size:5px;color:#444;transform:rotate(90deg);transform-origin:center">21</div>
<div class="a" style="left:240px;top:222px;width:3px;height:1px;background:#555"></div>
<div class="a" style="left:236px;top:229px;width:7px;height:1px;background:#555"></div>
<div class="a t" style="left:233px;top:221px;width:6px;height:7px;font-size:5px;color:#444;transform:rotate(90deg);transform-origin:center">20</div>
<div class="a" style="left:240px;top:236px;width:3px;height:1px;background:#555"></div>
<div class="a" style="left:236px;top:243px;width:7px;height:1px;background:#555"></div>
<div class="a t" style="left:233px;top:235px;width:6px;height:7px;font-size:5px;color:#444;transform:rotate(90deg);transform-origin:center">19</div>
<div class="a" style="left:240px;top:251px;width:3px;height:1px;background:#555"></div>
<div class="a" style="left:236px;top:258px;width:7px;height:1px;background:#555"></div>
<div class="a t" style="left:233px;top:250px;width:6px;height:7px;font-size:5px;color:#444;transform:rotate(90deg);transform-origin:center">18</div>
<div class="a" style="left:240px;top:265px;width:3px;height:1px;background:#555"></div>
<div class="a" style="left:236px;top:273px;width:7px;height:1px;background:#555"></div>
<div class="a t" style="left:233px;top:265px;width:6px;height:7px;font-size:5px;color:#444;transform:rotate(90deg);transform-origin:center">17</div>
<div class="a" style="left:240px;top:280px;width:3px;height:1px;background:#555"></div>
<div class="a" style="left:236px;top:287px;width:7px;height:1px;background:#555"></div>
<div class="a t" style="left:233px;top:279px;width:6px;height:7px;font-size:5px;color:#444;transform:rotate(90deg);transform-origin:center">16</div>
<div class="a" style="left:240px;top:294px;width:3px;height:1px;background:#555"></div>
<div class="a" style="left:236px;top:302px;width:7px;height:1px;background:#555"></div>
<div class="a t" style="left:233px;top:294px;width:6px;height:7px;font-size:5px;color:#444;transform:rotate(90deg);transform-origin:center">15</div>
<div class="a" style="left:240px;top:309px;width:3px;height:1px;background:#555"></div>
<div class="a" style="left:236px;top:316px;width:7px;height:1px;background:#555"></div>
<div class="a t" style="left:233px;top:308px;width:6px;height:7px;font-size:5px;color:#444;transform:rotate(90deg);transform-origin:center">14</div>
<div class="a" style="left:240px;top:324px;width:3px;height:1px;background:#555"></div>
<div class="a" style="left:236px;top:331px;width:7px;height:1px;background:#555"></div>
<div class="a t" style="left:233px;top:323px;width:6px;height:7px;font-size:5px;color:#444;transform:rotate(90deg);transform-origin:center">13</div>
<div class="a" style="left:240px;top:338px;width:3px;height:1px;background:#555"></div>
<div class="a" style="left:236px;top:346px;width:7px;height:1px;background:#555"></div>
<div class="a t" style="left:233px;top:338px;width:6px;height:7px;font-size:5px;color:#444;transform:rotate(90deg);transform-origin:center">12</div>
<div class="a" style="left:240px;top:353px;width:3px;height:1px;background:#555"></div>
<div class="a" style="left:236px;top:360px;width:7px;height:1px;background:#555"></div>
<div class="a t" style="left:233px;top:352px;width:6px;height:7px;font-size:5px;color:#444;transform:rotate(90deg);transform-origin:center">11</div>
<div class="a" style="left:240px;top:368px;width:3px;height:1px;background:#555"></div>
<div class="a" style="left:236px;top:375px;width:7px;height:1px;background:#555"></div>
<div class="a t" style="left:233px;top:367px;width:6px;height:7px;font-size:5px;color:#444;transform:rotate(90deg);transform-origin:center">10</div>
<div class="a" style="left:240px;top:382px;width:3px;height:1px;background:#555"></div>
<div class="a" style="left:236px;top:389px;width:7px;height:1px;background:#555"></div>
<div class="a t" style="left:233px;top:381px;width:6px;height:7px;font-size:5px;color:#444;transform:rotate(90deg);transform-origin:center">9</div>
<div class="a" style="left:240px;top:397px;width:3px;height:1px;background:#555"></div>
<div class="a" style="left:236px;top:404px;width:7px;height:1px;background:#555"></div>
<div class="a t" style="left:233px;top:396px;width:6px;height:7px;font-size:5px;color:#444;transform:rotate(90deg);transform-origin:center">8</div>
<div class="a" style="left:240px;top:411px;width:3px;height:1px;background:#555"></div>
<div class="a" style="left:236px;top:419px;width:7px;height:1px;background:#555"></div>
<div class="a t" style="left:233px;top:411px;width:6px;height:7px;font-size:5px;color:#444;transform:rotate(90deg);transform-origin:center">7</div>
<div class="a" style="left:240px;top:426px;width:3px;height:1px;background:#555"></div>
<div class="a" style="left:236px;top:433px;width:7px;height:1px;background:#555"></div>
<div class="a t" style="left:233px;top:425px;width:6px;height:7px;font-size:5px;color:#444;transform:rotate(90deg);transform-origin:center">6</div>
<div class="a" style="left:240px;top:441px;width:3px;height:1px;background:#555"></div>
<div class="a" style="left:236px;top:448px;width:7px;height:1px;background:#555"></div>
<div class="a t" style="left:233px;top:440px;width:6px;height:7px;font-size:5px;color:#444;transform:rotate(90deg);transform-origin:center">5</div>
<div class="a" style="left:240px;top:455px;width:3px;height:1px;background:#555"></div>
<div class="a" style="left:236px;top:462px;width:7px;height:1px;background:#555"></div>
<div class="a t" style="left:233px;top:454px;width:6px;height:7px;font-size:5px;color:#444;transform:rotate(90deg);transform-origin:center">4</div>
<div class="a" style="left:240px;top:470px;width:3px;height:1px;background:#555"></div>
<div class="a" style="left:236px;top:477px;width:7px;height:1px;background:#555"></div>
<div class="a t" style="left:233px;top:469px;width:6px;height:7px;font-size:5px;color:#444;transform:rotate(90deg);transform-origin:center">3</div>
<div class="a" style="left:240px;top:484px;width:3px;height:1px;background:#555"></div>
<div class="a" style="left:236px;top:492px;width:7px;height:1px;background:#555"></div>
<div class="a t" style="left:233px;top:484px;width:6px;height:7px;font-size:5px;color:#444;transform:rotate(90deg);transform-origin:center">2</div>
<div class="a" style="left:240px;top:499px;width:3px;height:1px;background:#555"></div>
<div class="a" style="left:236px;top:506px;width:7px;height:1px;background:#555"></div>
<div class="a t" style="left:233px;top:498px;width:6px;height:7px;font-size:5px;color:#444;transform:rotate(90deg);transform-origin:center">1</div>
<div class="a" style="left:240px;top:514px;width:3px;height:1px;background:#555"></div>
<div class="a" style="left:236px;top:521px;width:7px;height:1px;background:#555"></div>
<div class="a" style="left:240px;top:528px;width:3px;height:1px;background:#555"></div>
<div class="a" style="left:236px;top:535px;width:7px;height:1px;background:#555"></div>
<div class="a" style="left:240px;top:543px;width:3px;height:1px;background:#555"></div>
<div class="a" style="left:1055px;top:75px;width:11px;height:481px;background:#f0f0f0"></div>
<svg class="a" style="left:1057px;top:64px" width="7" height="5" viewBox="0 0 7 5"><path d="M1 4L3.5 1.5L6 4" fill="none" stroke="#555"/></svg>
<div class="a" style="left:1056px;top:179px;width:9px;height:272px;background:#cdcdcd"></div>
<svg class="a" style="left:1057px;top:547px" width="7" height="5" viewBox="0 0 7 5"><path d="M1 1L3.5 3.5L6 1" fill="none" stroke="#555"/></svg>
<div class="a" style="left:232px;top:556px;width:823px;height:10px;background:#f0f0f0"></div>
<div class="a" style="left:284px;top:557px;width:760px;height:8px;background:#cdcdcd"></div>
<svg class="a" style="left:1048px;top:558px" width="5" height="7" viewBox="0 0 5 7"><path d="M1 1L3.5 3.5L1 6" fill="none" stroke="#555"/></svg>
<svg class="a" style="left:277px;top:558px" width="5" height="7" viewBox="0 0 5 7"><path d="M4 1L1.5 3.5L4 6" fill="none" stroke="#333" stroke-width="1.2"/></svg>
<svg class="a" style="left:234px;top:557px" width="8" height="8" viewBox="0 0 8 8"><rect x="0.5" y="0.5" width="6" height="7" fill="#f4f4f4" stroke="#777"/><rect x="2" y="2" width="3" height="3" fill="#aaa"/></svg>
<div class="a" style="left:241px;top:556px;width:10px;height:10px;background:#cde4f7"></div>
<svg class="a" style="left:243px;top:557px" width="8" height="8" viewBox="0 0 8 8"><rect x="0.5" y="0.5" width="6" height="7" fill="#e8f0f8" stroke="#3a6aa0"/><path d="M2 2H5V5" stroke="#3a6aa0" fill="none"/></svg>
<svg class="a" style="left:256px;top:558px" width="7" height="8" viewBox="0 0 7 8"><path d="M1 4A3 3 0 1 1 4 7" fill="none" stroke="#555"/><path d="M0 3H3V5" fill="none" stroke="#555"/></svg>
<svg class="a" style="left:266px;top:558px" width="7" height="8" viewBox="0 0 7 8"><rect x="1" y="1" width="1.5" height="5" fill="#444"/><rect x="4" y="1" width="1.5" height="5" fill="#444"/></svg>
<div class="a" style="left:1066px;top:62px;width:14px;height:505px;background:#f0f0f0"></div>
<div class="a" style="left:1067px;top:64px;width:12px;height:28px;background:#f8f8f8;border:1px solid #bbb"></div>
<svg class="a" style="left:1068px;top:65px" width="9" height="9" viewBox="0 0 9 9"><rect x="0.5" y="0.5" width="8" height="7" fill="#e8f0f8" stroke="#3a5a8a"/><path d="M2 6L4 3L7 6" fill="none" stroke="#3a5a8a"/></svg>
<div class="a t" style="left:1068px;top:76px;font-size:6px;color:#333;line-height:7px">目<br>录</div>
<div class="a" style="left:1067px;top:94px;width:12px;height:49px;background:#f8f8f8;border:1px solid #bbb"></div>
<svg class="a" style="left:1068px;top:95px" width="9" height="9" viewBox="0 0 9 9"><rect x="0.5" y="0.5" width="8" height="8" fill="#d04040" stroke="#802020"/><rect x="2" y="2" width="5" height="3" fill="#f0a0a0"/></svg>
<div class="a t" style="left:1047px;top:117px;width:50px;height:8px;font-size:5.5px;color:#444;transform:rotate(90deg);text-align:center">ArcToolbox</div>
<div class="a" style="left:1067px;top:151px;width:12px;height:28px;background:#f8f8f8;border:1px solid #bbb"></div>
<svg class="a" style="left:1068px;top:152px" width="9" height="9" viewBox="0 0 9 9"><rect x="0.5" y="0.5" width="8" height="8" fill="#e8f0c0" stroke="#5a7a2a"/><path d="M1 7L8 3V8H1Z" fill="#8ab020"/></svg>
<div class="a t" style="left:1068px;top:163px;font-size:6px;color:#333;line-height:7px">图<br>层</div>
<div class="a" style="left:1067px;top:181px;width:12px;height:26px;background:#f8f8f8;border:1px solid #bbb"></div>
<svg class="a" style="left:1068px;top:182px" width="9" height="9" viewBox="0 0 9 9"><rect x="0.5" y="0.5" width="8" height="7" fill="#e8f0f8" stroke="#3a6aa0"/><circle cx="5" cy="5" r="2" fill="none" stroke="#3a6aa0"/></svg>
<div class="a t" style="left:1068px;top:193px;font-size:6px;color:#333;line-height:7px">搜<br>索</div>
<div class="a" style="left:0px;top:567px;width:1080px;height:13px;background:#f0f0f0;border-top:1px solid #e0e0e0"></div>
<div class="a t" style="left:922px;top:571px;font-size:6.8px;color:#222">-13.85&nbsp;&nbsp;6.21 厘米</div>
<div class="a" style="left:0px;top:580px;width:1080px;height:28px;background:#1c2128"></div>
<svg class="a" style="left:10px;top:587px" width="14" height="14" viewBox="0 0 14 14"><path d="M0 2L6 1.2V6.6H0Z M7 1L14 0V6.6H7Z M0 7.4H6V12.8L0 12Z M7 7.4H14V14L7 13Z" fill="#fff"/></svg>
<div class="a" style="left:34px;top:580px;width:241px;height:28px;background:#f0f0f0;border:1px solid #d0d0d0"></div>
<svg class="a" style="left:42px;top:587px" width="12" height="13" viewBox="0 0 12 13"><circle cx="7.5" cy="4.5" r="3.8" fill="none" stroke="#333" stroke-width="1.2"/><path d="M4.8 7.3L0.8 11.5" stroke="#333" stroke-width="1.4"/></svg>
<div class="a t" style="left:62px;top:588px;font-size:10.6px;color:#444">在这里输入你要搜索的内容</div>
<svg class="a" style="left:286px;top:588px" width="12" height="12" viewBox="0 0 12 12"><circle cx="6" cy="6" r="4.8" fill="none" stroke="#fff" stroke-width="1.6"/></svg>
<svg class="a" style="left:319px;top:588px" width="12" height="12" viewBox="0 0 12 12"><rect x="1" y="2" width="7" height="8" fill="none" stroke="#fff" stroke-width="1.2"/><path d="M10.5 1V11" stroke="#fff" stroke-width="1.2"/><path d="M0 6H9" stroke="#fff"/></svg>
<svg class="a" style="left:355px;top:585px" width="16" height="16" viewBox="0 0 16 16"><path d="M14 9H5C5.3 11.5 7 13 9.5 13C11 13 12.5 12.5 13.5 11.8V14.5C12.3 15.2 10.8 15.6 9 15.6C4.8 15.6 2 12.6 2 8.3C2 4 5 0.5 9 0.5C12.5 0.5 15 3.2 15 7.2V9ZM5.2 6.8H11.8C11.7 4.6 10.6 3.2 8.7 3.2C6.9 3.2 5.5 4.6 5.2 6.8Z" fill="#1e88e5"/></svg>
<svg class="a" style="left:389px;top:585px" width="15" height="16" viewBox="0 0 15 16"><path d="M4.5 5V3A3 3 0 0 1 10.5 3V5" fill="none" stroke="#fff" stroke-width="1.2"/><rect x="0.5" y="5" width="14" height="11" fill="#fff"/><rect x="4" y="7.5" width="3" height="3" fill="#f25022"/><rect x="8" y="7.5" width="3" height="3" fill="#7fba00"/><rect x="4" y="11.5" width="3" height="3" fill="#00a4ef"/><rect x="8" y="11.5" width="3" height="3" fill="#ffb900"/></svg>
<svg class="a" style="left:424px;top:585px" width="16" height="16" viewBox="0 0 16 16"><circle cx="8" cy="8" r="7.5" fill="#db4437"/><path d="M8 8L1.5 4.3A7.5 7.5 0 0 1 14.5 4.3Z" fill="#db4437"/><path d="M8 8L14.5 4.3A7.5 7.5 0 0 1 8 15.5Z" fill="#f4b400"/><path d="M8 8L8 15.5A7.5 7.5 0 0 1 1.5 4.3Z" fill="#0f9d58"/><circle cx="8" cy="8" r="3.6" fill="#fff"/><circle cx="8" cy="8" r="2.8" fill="#4285f4"/></svg>
<div class="a" style="left:455px;top:604px;width:23px;height:2px;background:#7fb0e0"></div>
<svg class="a" style="left:457px;top:586px" width="18" height="14" viewBox="0 0 18 14"><rect x="0" y="1" width="7" height="3" fill="#e8b030"/><rect x="0" y="3" width="18" height="11" fill="#f0c040"/><rect x="4" y="8" width="10" height="4" fill="#2a8ad0"/></svg>
<div class="a" style="left:490px;top:604px;width:23px;height:2px;background:#7fb0e0"></div>
<svg class="a" style="left:494px;top:585px" width="16" height="16" viewBox="0 0 16 16"><circle cx="7" cy="7" r="6" fill="#2aa0c0"/><circle cx="7" cy="7" r="4" fill="#8ae0a0"/><circle cx="6" cy="6" r="2" fill="#e0f8ff"/><path d="M10.5 10.5L15 15" stroke="#e07030" stroke-width="2.5"/></svg>
<svg class="a" style="left:842px;top:589px" width="12" height="12" viewBox="0 0 12 12"><circle cx="8" cy="3.5" r="2.3" fill="none" stroke="#fff"/><path d="M4 11C4 8 6 6.5 8 6.5S12 8 12 11" fill="none" stroke="#fff"/><circle cx="3.5" cy="7" r="1.8" fill="none" stroke="#fff"/><path d="M0.5 12C0.5 10 2 9 3.5 9" fill="none" stroke="#fff"/></svg>
<svg class="a" style="left:869px;top:590px" width="9" height="6" viewBox="0 0 9 6"><path d="M0.5 5.5L4.5 1L8.5 5.5" fill="none" stroke="#fff" stroke-width="1.1"/></svg>
<svg class="a" style="left:886px;top:588px" width="9" height="11" viewBox="0 0 9 11"><path d="M0.5 1.5L4.5 0.5L8.5 1.5V5C8.5 8 6.5 10 4.5 10.5C2.5 10 0.5 8 0.5 5Z" fill="#f0b020"/><path d="M4.5 0.5L8.5 1.5V5C8.5 8 6.5 10 4.5 10.5Z" fill="#e08010"/></svg>
<svg class="a" style="left:901px;top:591px" width="11" height="7" viewBox="0 0 11 7"><rect x="0.5" y="0.5" width="9" height="6" fill="#ddd" stroke="#fff"/><rect x="10" y="2" width="1" height="3" fill="#fff"/></svg>
<svg class="a" style="left:920px;top:589px" width="10" height="10" viewBox="0 0 10 10"><path d="M1 9A8 8 0 0 1 9 1M3 9A6 6 0 0 1 9 3M5 9A4 4 0 0 1 9 5" fill="none" stroke="#aaa" stroke-width="0.9"/><circle cx="8.5" cy="8.5" r="1" fill="#fff"/></svg>
<svg class="a" style="left:935px;top:589px" width="10" height="10" viewBox="0 0 10 10"><path d="M0.5 3.5H2.5L5 1V9L2.5 6.5H0.5Z" fill="none" stroke="#fff" stroke-width="0.9"/><path d="M6.5 3A2.5 2.5 0 0 1 6.5 7M8 1.5A4.5 4.5 0 0 1 8 8.5" fill="none" stroke="#fff" stroke-width="0.8"/></svg>
<div class="a t" style="left:950px;top:586px;font-size:12px;color:#fff">英</div>
<div class="a" style="left:973px;top:588px;width:11px;height:11px;border:1px solid #fff;color:#fff;font-size:8px;line-height:9px;text-align:center">拼</div>
<div class="a t" style="left:1005px;top:583px;font-size:8.5px;color:#fff">10:43</div>
<div class="a t" style="left:998px;top:597px;font-size:8.5px;color:#fff">2019-9-4</div>
<svg class="a" style="left:1050px;top:588px" width="13" height="12" viewBox="0 0 13 12"><path d="M0.5 0.5H12.5V9.5H8L6.5 11.5L5 9.5H0.5Z" fill="none" stroke="#fff" stroke-width="1"/></svg>
<div class="a" style="left:465px;top:86px;width:311px;height:439px;background:#fff;border-left:1px solid #606060;border-top:1px solid #606060;border-right:2px solid #707070;border-bottom:2px solid #707070"></div>
<div class="a t" style="left:530px;top:104px;font-family:'Liberation Serif',serif;font-size:12px;color:#444">中韩交界部分区域<span style="font-family:'Liberation Mono',monospace;font-size:11.2px">PM2.5</span>浓度分布</div>
<div class="a t" style="left:569px;top:122px;font-family:'Liberation Mono',monospace;font-size:8.5px;color:#333">2019-3-16 7:00 (UTC)</div>
<svg class="a" style="left:489px;top:149px" width="263" height="270" viewBox="0 0 263 270"><rect width="263" height="270" fill="#78ae00"/><polygon fill="#006400" points="0,0 119,0 117,12 118,25 121,32 112,42 104,47 100,53 108,57 117,58 117,64 107,68 96,70 89,74 86,82 86,89 90,93 98,98 107,101 116,104 120,109 112,115 99,117 87,121 79,128 71,134 64,140 58,144 54,149 51,157 47,165 40,172 25,178 10,181 0,182"/><polygon fill="#78ae00" points="0,20 7,19 12,24 13,33 8,39 0,40"/><ellipse cx="3.2" cy="9.5" rx="1.6" ry="0.9" fill="#78ae00"/><ellipse cx="5.4" cy="11.7" rx="0.9" ry="1.4" fill="#78ae00"/><ellipse cx="0.4" cy="12.3" rx="0.9" ry="0.9" fill="#78ae00"/><ellipse cx="4.2" cy="16.3" rx="0.9" ry="1.1" fill="#78ae00"/><ellipse cx="6.3" cy="17.5" rx="1.5" ry="1.3" fill="#78ae00"/><ellipse fill="#78ae00" cx="27" cy="44" rx="3.5" ry="2.5" transform="rotate(0 27 44)"/><ellipse fill="#78ae00" cx="40" cy="42" rx="3" ry="2" transform="rotate(0 40 42)"/><ellipse fill="#78ae00" cx="52" cy="50" rx="4" ry="3" transform="rotate(0 52 50)"/><ellipse fill="#78ae00" cx="57" cy="52" rx="3" ry="2.5" transform="rotate(0 57 52)"/><ellipse cx="61.1" cy="38.8" rx="1.4" ry="0.9" fill="#78ae00"/><ellipse cx="27.8" cy="40.0" rx="0.9" ry="1.3" fill="#78ae00"/><ellipse cx="29.2" cy="47.9" rx="1.2" ry="0.9" fill="#78ae00"/><ellipse cx="43.9" cy="39.1" rx="0.7" ry="0.8" fill="#78ae00"/><ellipse cx="49.2" cy="45.3" rx="0.9" ry="1.1" fill="#78ae00"/><ellipse cx="40.1" cy="43.1" rx="1.3" ry="1.2" fill="#78ae00"/><ellipse cx="31.8" cy="47.8" rx="1.1" ry="1.4" fill="#78ae00"/><ellipse cx="51.2" cy="42.9" rx="1.5" ry="0.7" fill="#78ae00"/><ellipse cx="38.7" cy="50.9" rx="0.7" ry="1.0" fill="#78ae00"/><ellipse cx="23.6" cy="49.4" rx="1.3" ry="1.1" fill="#78ae00"/><polygon fill="#78ae00" points="80,18 84,10 92,7 97,9 95,16 90,24 84,28 80,26"/><ellipse cx="97.5" cy="12.8" rx="1.4" ry="1.3" fill="#78ae00"/><ellipse cx="91.6" cy="16.4" rx="1.6" ry="1.7" fill="#78ae00"/><ellipse cx="89.5" cy="21.6" rx="0.7" ry="1.4" fill="#78ae00"/><ellipse cx="92.9" cy="29.8" rx="1.6" ry="0.9" fill="#78ae00"/><ellipse cx="87.7" cy="21.7" rx="0.6" ry="1.2" fill="#78ae00"/><ellipse cx="83.4" cy="7.9" rx="0.7" ry="1.5" fill="#78ae00"/><ellipse cx="82.6" cy="11.2" rx="1.1" ry="1.6" fill="#78ae00"/><ellipse cx="81.6" cy="16.2" rx="1.3" ry="1.7" fill="#78ae00"/><ellipse fill="#78ae00" cx="63" cy="96" rx="11" ry="10" transform="rotate(0 63 96)"/><polygon fill="#78ae00" points="6.6,117.4 16.4,110.9 32.9,110 42.8,114.2 49.3,124 54.3,133.9 55.9,143.8 45,140 35,132 20,125 8,122"/><polygon fill="#2a7008" points="0,125 8,122 20,125 35,132 45,140 54,146 52,157 47,165 40,172 25,178 10,181 0,182"/><ellipse cx="41.0" cy="172.4" rx="1.6" ry="1.8" fill="#006400"/><ellipse cx="17.9" cy="173.5" rx="2.9" ry="1.3" fill="#006400"/><ellipse cx="8.8" cy="137.0" rx="1.5" ry="2.0" fill="#006400"/><ellipse cx="29.5" cy="138.7" rx="1.0" ry="1.8" fill="#006400"/><ellipse cx="18.5" cy="155.7" rx="2.9" ry="2.4" fill="#006400"/><ellipse cx="25.8" cy="158.6" rx="2.4" ry="1.1" fill="#006400"/><ellipse cx="45.0" cy="167.7" rx="2.7" ry="2.6" fill="#006400"/><ellipse cx="19.6" cy="146.3" rx="1.2" ry="2.3" fill="#006400"/><ellipse cx="3.1" cy="127.8" rx="1.4" ry="1.3" fill="#006400"/><ellipse cx="17.0" cy="126.9" rx="1.0" ry="1.3" fill="#006400"/><ellipse cx="5.1" cy="144.4" rx="1.1" ry="2.7" fill="#006400"/><ellipse cx="30.7" cy="132.3" rx="1.5" ry="1.7" fill="#006400"/><ellipse cx="18.2" cy="130.9" rx="2.7" ry="3.0" fill="#006400"/><ellipse cx="23.3" cy="151.1" rx="1.2" ry="1.2" fill="#006400"/><ellipse cx="17.1" cy="138.8" rx="2.7" ry="1.3" fill="#006400"/><ellipse cx="1.2" cy="177.3" rx="2.1" ry="1.3" fill="#006400"/><ellipse cx="27.2" cy="125.5" rx="2.1" ry="3.0" fill="#006400"/><ellipse cx="43.2" cy="163.0" rx="1.5" ry="1.7" fill="#006400"/><ellipse cx="8.4" cy="167.2" rx="2.1" ry="2.6" fill="#006400"/><ellipse cx="16.5" cy="136.5" rx="2.6" ry="3.0" fill="#006400"/><ellipse cx="42.6" cy="169.1" rx="2.6" ry="2.5" fill="#006400"/><ellipse cx="11.3" cy="153.0" rx="1.7" ry="1.1" fill="#006400"/><ellipse cx="1.4" cy="139.6" rx="1.5" ry="2.4" fill="#006400"/><ellipse cx="47.8" cy="149.0" rx="2.9" ry="3.0" fill="#006400"/><ellipse cx="47.8" cy="144.4" rx="1.4" ry="1.5" fill="#006400"/><ellipse cx="9.8" cy="135.4" rx="2.2" ry="2.8" fill="#006400"/><ellipse cx="42.0" cy="150.9" rx="2.3" ry="2.6" fill="#006400"/><ellipse cx="4.2" cy="161.0" rx="2.8" ry="2.6" fill="#006400"/><ellipse cx="37.5" cy="150.8" rx="1.4" ry="2.6" fill="#006400"/><ellipse cx="16.6" cy="168.8" rx="2.9" ry="1.8" fill="#006400"/><ellipse cx="20.1" cy="177.0" rx="2.4" ry="1.3" fill="#006400"/><ellipse cx="6.4" cy="132.5" rx="2.8" ry="2.6" fill="#006400"/><ellipse cx="7.3" cy="170.3" rx="3.0" ry="2.3" fill="#006400"/><ellipse cx="17.5" cy="154.7" rx="1.3" ry="1.0" fill="#006400"/><ellipse cx="48.5" cy="160.4" rx="2.1" ry="2.9" fill="#006400"/><ellipse cx="21.7" cy="172.8" rx="2.7" ry="1.4" fill="#006400"/><ellipse cx="12.6" cy="140.4" rx="1.5" ry="2.2" fill="#006400"/><ellipse cx="13.0" cy="147.5" rx="1.3" ry="2.8" fill="#006400"/><ellipse cx="17.7" cy="149.7" rx="2.2" ry="2.8" fill="#006400"/><ellipse cx="21.0" cy="175.4" rx="2.0" ry="2.1" fill="#006400"/><ellipse cx="26.2" cy="125.0" rx="1.2" ry="0.9" fill="#78ae00"/><ellipse cx="0.2" cy="168.8" rx="0.8" ry="1.3" fill="#78ae00"/><ellipse cx="36.3" cy="155.2" rx="1.1" ry="1.3" fill="#78ae00"/><ellipse cx="27.8" cy="167.9" rx="0.7" ry="1.4" fill="#78ae00"/><ellipse cx="12.4" cy="139.5" rx="1.7" ry="1.3" fill="#78ae00"/><ellipse cx="28.1" cy="166.6" rx="1.9" ry="1.2" fill="#78ae00"/><ellipse cx="30.6" cy="152.3" rx="1.3" ry="1.6" fill="#78ae00"/><ellipse cx="22.6" cy="153.9" rx="1.3" ry="1.9" fill="#78ae00"/><ellipse cx="35.0" cy="173.1" rx="1.9" ry="1.0" fill="#78ae00"/><ellipse cx="28.0" cy="176.8" rx="1.8" ry="0.8" fill="#78ae00"/><ellipse cx="6.1" cy="148.8" rx="0.7" ry="0.9" fill="#78ae00"/><ellipse cx="3.7" cy="161.5" rx="1.7" ry="1.9" fill="#78ae00"/><polygon fill="#006400" points="0,252.8 13.3,248.3 28.9,246.1 44.4,248.3 57.8,255 68.9,263.9 75.6,270 0,270"/><ellipse cx="9.3" cy="250.7" rx="2.0" ry="1.2" fill="#006400"/><ellipse cx="53.0" cy="254.5" rx="1.3" ry="2.4" fill="#006400"/><ellipse cx="23.9" cy="247.3" rx="2.5" ry="2.2" fill="#006400"/><ellipse cx="9.7" cy="246.5" rx="1.8" ry="1.5" fill="#006400"/><ellipse cx="11.7" cy="244.8" rx="2.1" ry="1.0" fill="#006400"/><ellipse cx="33.2" cy="246.6" rx="1.0" ry="1.5" fill="#006400"/><ellipse cx="37.4" cy="247.7" rx="1.1" ry="2.5" fill="#006400"/><ellipse cx="47.3" cy="254.6" rx="1.2" ry="1.4" fill="#006400"/><ellipse cx="2.4" cy="251.7" rx="1.4" ry="1.2" fill="#006400"/><ellipse cx="25.3" cy="253.7" rx="2.2" ry="1.4" fill="#006400"/><ellipse cx="9.0" cy="253.8" rx="1.9" ry="2.1" fill="#006400"/><ellipse cx="5.4" cy="240.9" rx="2.0" ry="1.6" fill="#006400"/><ellipse cx="4.3" cy="254.1" rx="2.0" ry="2.2" fill="#006400"/><ellipse cx="5.0" cy="252.8" rx="1.1" ry="2.3" fill="#006400"/><ellipse cx="27.2" cy="245.1" rx="1.8" ry="2.4" fill="#006400"/><ellipse cx="16.1" cy="241.9" rx="1.8" ry="1.4" fill="#006400"/><ellipse cx="6.6" cy="242.4" rx="1.1" ry="1.3" fill="#006400"/><ellipse cx="18.7" cy="244.6" rx="2.1" ry="1.4" fill="#006400"/><ellipse cx="30.0" cy="242.7" rx="1.5" ry="1.0" fill="#006400"/><ellipse cx="15.0" cy="240.2" rx="2.1" ry="1.8" fill="#006400"/><ellipse cx="10.4" cy="231.6" rx="2.1" ry="0.9" fill="#006400"/><ellipse cx="45.0" cy="230.1" rx="1.5" ry="2.0" fill="#006400"/><ellipse cx="21.6" cy="232.7" rx="1.8" ry="2.2" fill="#006400"/><ellipse cx="18.8" cy="244.1" rx="1.8" ry="1.7" fill="#006400"/><ellipse cx="22.3" cy="227.2" rx="0.9" ry="1.0" fill="#006400"/><ellipse cx="3.9" cy="240.9" rx="1.2" ry="1.0" fill="#006400"/><ellipse cx="4.6" cy="244.4" rx="2.0" ry="1.7" fill="#006400"/><ellipse cx="15.5" cy="223.5" rx="1.2" ry="1.4" fill="#006400"/><ellipse cx="8.7" cy="230.6" rx="1.2" ry="2.1" fill="#006400"/><ellipse cx="53.5" cy="234.1" rx="1.1" ry="2.2" fill="#006400"/><ellipse cx="17.0" cy="227.5" rx="0.8" ry="1.3" fill="#006400"/><ellipse cx="26.1" cy="232.6" rx="1.1" ry="1.5" fill="#006400"/><ellipse cx="0.3" cy="224.2" rx="0.9" ry="1.4" fill="#006400"/><ellipse cx="2.3" cy="215.8" rx="1.2" ry="1.1" fill="#006400"/><ellipse cx="32.2" cy="233.5" rx="1.9" ry="1.7" fill="#006400"/><ellipse cx="39.4" cy="245.8" rx="1.3" ry="1.3" fill="#006400"/><ellipse cx="54.2" cy="220.2" rx="1.8" ry="1.7" fill="#006400"/><ellipse cx="2.4" cy="244.2" rx="2.0" ry="1.7" fill="#006400"/><ellipse cx="40.4" cy="243.4" rx="1.0" ry="1.5" fill="#006400"/><ellipse cx="27.7" cy="244.2" rx="1.9" ry="2.0" fill="#006400"/><ellipse cx="32.1" cy="246.2" rx="1.8" ry="1.8" fill="#006400"/><ellipse cx="12.6" cy="216.1" rx="1.0" ry="1.3" fill="#006400"/><ellipse cx="5.8" cy="244.3" rx="1.6" ry="1.7" fill="#006400"/><ellipse cx="34.4" cy="238.8" rx="1.5" ry="0.8" fill="#006400"/><ellipse cx="43.9" cy="241.2" rx="1.5" ry="1.5" fill="#006400"/><ellipse cx="36.3" cy="217.3" rx="1.8" ry="1.2" fill="#006400"/><ellipse cx="4.1" cy="224.3" rx="1.8" ry="1.1" fill="#006400"/><ellipse cx="40.7" cy="249.2" rx="1.5" ry="1.3" fill="#006400"/><ellipse cx="26.3" cy="238.9" rx="1.9" ry="1.7" fill="#006400"/><ellipse cx="35.4" cy="217.7" rx="1.0" ry="1.2" fill="#006400"/><ellipse cx="40.9" cy="225.7" rx="1.6" ry="0.8" fill="#006400"/><ellipse cx="3.3" cy="224.4" rx="1.7" ry="1.8" fill="#006400"/><ellipse cx="37.2" cy="225.2" rx="1.5" ry="1.5" fill="#006400"/><ellipse cx="25.6" cy="219.1" rx="2.1" ry="1.1" fill="#006400"/><ellipse cx="53.8" cy="247.8" rx="0.8" ry="1.4" fill="#006400"/><ellipse cx="45.1" cy="248.9" rx="1.4" ry="1.2" fill="#006400"/><ellipse cx="11.5" cy="248.1" rx="1.1" ry="1.6" fill="#006400"/><ellipse cx="7.8" cy="233.3" rx="2.1" ry="1.0" fill="#006400"/><ellipse cx="45.1" cy="232.8" rx="2.0" ry="1.8" fill="#006400"/><ellipse cx="12.7" cy="246.4" rx="1.5" ry="0.8" fill="#006400"/><ellipse cx="0.2" cy="232.2" rx="1.4" ry="1.2" fill="#006400"/><ellipse cx="7.7" cy="227.0" rx="1.2" ry="2.0" fill="#006400"/><ellipse cx="0.1" cy="241.3" rx="2.0" ry="1.0" fill="#006400"/><ellipse cx="51.0" cy="240.0" rx="2.1" ry="1.2" fill="#006400"/><ellipse cx="20.5" cy="228.8" rx="2.2" ry="1.6" fill="#006400"/><ellipse cx="34.4" cy="212.8" rx="0.9" ry="0.6" fill="#006400"/><ellipse cx="24.1" cy="225.0" rx="0.9" ry="1.5" fill="#006400"/><ellipse cx="30.0" cy="208.0" rx="1.1" ry="0.8" fill="#006400"/><ellipse cx="34.9" cy="228.7" rx="1.5" ry="1.4" fill="#006400"/><ellipse cx="45.2" cy="227.4" rx="1.5" ry="1.1" fill="#006400"/><ellipse cx="48.8" cy="201.5" rx="1.3" ry="1.1" fill="#006400"/><ellipse cx="50.1" cy="219.3" rx="0.9" ry="0.6" fill="#006400"/><ellipse cx="57.1" cy="203.8" rx="1.1" ry="0.9" fill="#006400"/><ellipse cx="31.9" cy="222.2" rx="1.6" ry="0.9" fill="#006400"/><ellipse cx="46.2" cy="209.0" rx="1.2" ry="1.0" fill="#006400"/><ellipse cx="26.7" cy="204.8" rx="0.8" ry="1.5" fill="#006400"/><ellipse cx="39.9" cy="206.6" rx="1.5" ry="1.6" fill="#006400"/><ellipse cx="38.0" cy="204.2" rx="0.8" ry="0.7" fill="#006400"/><ellipse cx="33.7" cy="202.7" rx="0.8" ry="0.9" fill="#006400"/><ellipse cx="42.8" cy="226.6" rx="1.3" ry="1.0" fill="#006400"/><polygon fill="#006400" points="197,0 248.8,0 246.5,11.8 245.2,25 241.3,34.2 231,38 225.8,40.3 220,42.6 215.4,38 206.2,35.7 199.3,38 189,39 183.2,35.7 185.5,31 193.6,23 194.7,11.5"/><polygon fill="#2a7008" points="162,0 197,0 194.7,11.5 188,15 178,16 168,13"/><polygon fill="#2a7008" points="190,44 200,42 203,50 200,58 196,64 191,59 189,51"/><ellipse fill="#78ae00" cx="223" cy="25" rx="3" ry="4" transform="rotate(0 223 25)"/><ellipse cx="177.4" cy="15.7" rx="1.3" ry="1.3" fill="#006400"/><ellipse cx="166.9" cy="8.3" rx="2.2" ry="1.0" fill="#006400"/><ellipse cx="180.1" cy="18.9" rx="2.0" ry="1.1" fill="#006400"/><ellipse cx="173.1" cy="7.5" rx="1.4" ry="1.4" fill="#006400"/><ellipse cx="193.6" cy="25.5" rx="2.0" ry="0.8" fill="#006400"/><ellipse cx="166.0" cy="21.3" rx="2.1" ry="1.5" fill="#006400"/><ellipse cx="182.6" cy="0.0" rx="1.3" ry="2.1" fill="#006400"/><ellipse cx="189.8" cy="25.7" rx="2.2" ry="1.1" fill="#006400"/><ellipse cx="168.3" cy="4.6" rx="1.5" ry="1.8" fill="#006400"/><ellipse cx="193.2" cy="21.7" rx="1.7" ry="1.9" fill="#006400"/><ellipse cx="178.7" cy="16.5" rx="0.9" ry="1.9" fill="#006400"/><ellipse cx="172.0" cy="27.6" rx="1.7" ry="1.2" fill="#006400"/><ellipse cx="168.8" cy="7.6" rx="1.7" ry="1.8" fill="#006400"/><ellipse cx="168.4" cy="2.1" rx="1.5" ry="1.6" fill="#006400"/><ellipse cx="176.6" cy="6.7" rx="1.6" ry="0.8" fill="#006400"/><ellipse cx="174.0" cy="13.8" rx="2.1" ry="1.7" fill="#006400"/><ellipse cx="191.5" cy="14.3" rx="1.1" ry="1.1" fill="#006400"/><ellipse cx="193.8" cy="21.1" rx="1.2" ry="0.8" fill="#006400"/><ellipse cx="179.9" cy="20.2" rx="1.4" ry="1.2" fill="#006400"/><ellipse cx="185.0" cy="27.8" rx="1.1" ry="0.8" fill="#006400"/><ellipse cx="198.5" cy="54.7" rx="1.8" ry="1.1" fill="#006400"/><ellipse cx="209.9" cy="65.9" rx="1.5" ry="1.1" fill="#006400"/><ellipse cx="214.2" cy="50.9" rx="1.9" ry="1.1" fill="#006400"/><ellipse cx="195.5" cy="66.6" rx="1.2" ry="2.1" fill="#006400"/><ellipse cx="202.4" cy="46.6" rx="1.1" ry="1.4" fill="#006400"/><ellipse cx="206.6" cy="73.2" rx="1.0" ry="1.4" fill="#006400"/><ellipse cx="195.3" cy="74.1" rx="1.0" ry="0.9" fill="#006400"/><ellipse cx="191.5" cy="53.8" rx="2.1" ry="2.0" fill="#006400"/><ellipse cx="208.3" cy="74.9" rx="2.1" ry="1.3" fill="#006400"/><ellipse cx="194.6" cy="72.8" rx="1.8" ry="0.8" fill="#006400"/><ellipse cx="206.6" cy="53.3" rx="1.3" ry="1.3" fill="#006400"/><ellipse cx="194.2" cy="40.1" rx="1.2" ry="1.3" fill="#006400"/><ellipse cx="213.9" cy="44.3" rx="2.1" ry="1.1" fill="#006400"/><ellipse cx="198.9" cy="68.8" rx="2.0" ry="1.4" fill="#006400"/><ellipse cx="191.2" cy="56.6" rx="1.3" ry="2.1" fill="#006400"/><ellipse cx="194.8" cy="52.7" rx="2.1" ry="0.8" fill="#006400"/><ellipse cx="200.3" cy="68.4" rx="1.9" ry="0.9" fill="#006400"/><ellipse cx="190.9" cy="42.2" rx="2.1" ry="1.2" fill="#006400"/><ellipse cx="208.7" cy="71.4" rx="1.3" ry="1.2" fill="#006400"/><ellipse cx="213.9" cy="61.6" rx="1.2" ry="1.8" fill="#006400"/><ellipse cx="197.9" cy="49.6" rx="0.8" ry="1.9" fill="#006400"/><ellipse cx="212.9" cy="62.2" rx="2.1" ry="0.8" fill="#006400"/><ellipse cx="195.8" cy="56.6" rx="2.1" ry="2.1" fill="#006400"/><ellipse cx="199.7" cy="48.8" rx="1.4" ry="1.5" fill="#006400"/><ellipse cx="213.2" cy="46.4" rx="1.9" ry="1.8" fill="#006400"/><ellipse cx="210.6" cy="67.0" rx="1.7" ry="1.3" fill="#006400"/><ellipse cx="198.0" cy="52.7" rx="1.9" ry="0.9" fill="#006400"/><ellipse cx="194.9" cy="66.4" rx="1.1" ry="0.9" fill="#006400"/><ellipse cx="190.8" cy="59.3" rx="1.3" ry="2.2" fill="#006400"/><ellipse cx="212.1" cy="74.6" rx="1.2" ry="0.9" fill="#006400"/><ellipse cx="216.3" cy="24.0" rx="1.7" ry="1.3" fill="#78ae00"/><ellipse cx="218.0" cy="23.0" rx="1.5" ry="1.6" fill="#78ae00"/><ellipse cx="224.7" cy="28.2" rx="1.6" ry="0.9" fill="#78ae00"/><ellipse cx="225.9" cy="21.5" rx="1.5" ry="1.2" fill="#78ae00"/><ellipse cx="224.6" cy="20.4" rx="1.1" ry="1.1" fill="#78ae00"/><ellipse cx="146.4" cy="17.7" rx="1.1" ry="0.9" fill="#006400"/><ellipse cx="156.6" cy="19.8" rx="1.1" ry="0.8" fill="#006400"/><ellipse cx="174.0" cy="13.1" rx="1.5" ry="0.7" fill="#006400"/><ellipse cx="159.9" cy="16.4" rx="1.4" ry="1.4" fill="#006400"/><ellipse cx="141.7" cy="5.9" rx="0.7" ry="0.8" fill="#006400"/><ellipse cx="180.9" cy="11.7" rx="1.4" ry="0.9" fill="#006400"/><ellipse cx="176.4" cy="9.0" rx="0.8" ry="1.3" fill="#006400"/><ellipse cx="179.7" cy="2.1" rx="1.1" ry="1.2" fill="#006400"/><ellipse cx="149.1" cy="7.4" rx="0.7" ry="0.8" fill="#006400"/><ellipse cx="150.7" cy="12.0" rx="1.2" ry="0.8" fill="#006400"/><ellipse cx="140.5" cy="6.5" rx="1.2" ry="0.8" fill="#006400"/><ellipse cx="153.1" cy="4.1" rx="1.3" ry="1.1" fill="#006400"/><polygon fill="#2a7008" points="184,128 195,124 205,130 211,145 210,160 206,172 196,177 186,176 183,160"/><ellipse cx="196.9" cy="73.0" rx="1.3" ry="1.5" fill="#006400"/><ellipse cx="214.2" cy="72.7" rx="1.0" ry="1.6" fill="#006400"/><ellipse cx="207.3" cy="78.5" rx="1.2" ry="1.9" fill="#006400"/><ellipse cx="204.4" cy="87.0" rx="1.2" ry="1.3" fill="#006400"/><ellipse cx="220.9" cy="99.9" rx="1.2" ry="1.0" fill="#006400"/><ellipse cx="216.8" cy="76.1" rx="0.8" ry="1.9" fill="#006400"/><ellipse cx="207.7" cy="94.6" rx="1.3" ry="1.9" fill="#006400"/><ellipse cx="208.8" cy="74.9" rx="0.8" ry="1.5" fill="#006400"/><ellipse cx="214.2" cy="97.3" rx="0.9" ry="1.5" fill="#006400"/><ellipse cx="206.1" cy="85.1" rx="1.0" ry="1.1" fill="#006400"/><ellipse cx="210.6" cy="97.8" rx="0.9" ry="1.4" fill="#006400"/><ellipse cx="219.1" cy="99.0" rx="1.0" ry="1.0" fill="#006400"/><ellipse cx="223.3" cy="99.3" rx="1.4" ry="0.9" fill="#006400"/><ellipse cx="222.8" cy="81.6" rx="1.9" ry="1.5" fill="#006400"/><ellipse cx="219.7" cy="74.8" rx="1.7" ry="1.1" fill="#006400"/><ellipse cx="207.1" cy="95.4" rx="1.8" ry="1.0" fill="#006400"/><ellipse cx="201.5" cy="82.0" rx="1.4" ry="1.3" fill="#006400"/><ellipse cx="198.7" cy="77.4" rx="1.7" ry="1.9" fill="#006400"/><ellipse cx="196.2" cy="86.9" rx="1.7" ry="0.8" fill="#006400"/><ellipse cx="220.1" cy="73.5" rx="1.5" ry="1.5" fill="#006400"/><ellipse cx="213.8" cy="79.2" rx="1.3" ry="1.5" fill="#006400"/><ellipse cx="207.8" cy="89.8" rx="1.3" ry="1.3" fill="#006400"/><ellipse cx="195.7" cy="88.6" rx="1.4" ry="1.1" fill="#006400"/><ellipse cx="217.9" cy="93.4" rx="1.3" ry="1.0" fill="#006400"/><ellipse cx="209.2" cy="73.2" rx="1.0" ry="1.3" fill="#006400"/><ellipse cx="197.8" cy="83.3" rx="1.4" ry="0.8" fill="#006400"/><ellipse cx="214.1" cy="72.5" rx="1.7" ry="1.7" fill="#006400"/><ellipse cx="210.3" cy="71.6" rx="1.4" ry="1.3" fill="#006400"/><ellipse cx="223.5" cy="74.1" rx="1.8" ry="2.0" fill="#006400"/><ellipse cx="217.0" cy="94.4" rx="1.0" ry="2.0" fill="#006400"/><ellipse cx="222.2" cy="128.7" rx="1.9" ry="1.0" fill="#006400"/><ellipse cx="232.6" cy="127.9" rx="0.9" ry="1.2" fill="#006400"/><ellipse cx="231.5" cy="104.8" rx="1.9" ry="1.1" fill="#006400"/><ellipse cx="233.5" cy="104.3" rx="1.4" ry="1.9" fill="#006400"/><ellipse cx="212.3" cy="107.9" rx="1.4" ry="1.2" fill="#006400"/><ellipse cx="206.3" cy="105.5" rx="1.0" ry="1.9" fill="#006400"/><ellipse cx="228.8" cy="126.9" rx="1.0" ry="1.7" fill="#006400"/><ellipse cx="209.0" cy="115.9" rx="1.6" ry="1.2" fill="#006400"/><ellipse cx="235.6" cy="116.7" rx="1.5" ry="1.9" fill="#006400"/><ellipse cx="208.7" cy="129.8" rx="1.6" ry="1.3" fill="#006400"/><ellipse cx="232.9" cy="107.9" rx="2.0" ry="1.5" fill="#006400"/><ellipse cx="217.6" cy="122.9" rx="1.3" ry="1.0" fill="#006400"/><ellipse cx="231.0" cy="101.4" rx="1.8" ry="1.1" fill="#006400"/><ellipse cx="227.4" cy="129.5" rx="1.5" ry="1.6" fill="#006400"/><ellipse cx="215.9" cy="100.1" rx="0.8" ry="1.0" fill="#006400"/><ellipse cx="226.6" cy="113.0" rx="1.4" ry="1.9" fill="#006400"/><ellipse cx="209.6" cy="106.8" rx="1.6" ry="0.8" fill="#006400"/><ellipse cx="205.1" cy="110.6" rx="0.9" ry="1.2" fill="#006400"/><ellipse cx="212.8" cy="117.5" rx="1.5" ry="1.0" fill="#006400"/><ellipse cx="226.8" cy="114.2" rx="1.0" ry="1.9" fill="#006400"/><ellipse cx="213.5" cy="104.5" rx="0.9" ry="1.6" fill="#006400"/><ellipse cx="235.5" cy="123.5" rx="1.3" ry="1.1" fill="#006400"/><ellipse cx="205.4" cy="119.3" rx="1.5" ry="1.2" fill="#006400"/><ellipse cx="227.6" cy="113.3" rx="1.9" ry="1.7" fill="#006400"/><ellipse cx="213.7" cy="127.1" rx="0.9" ry="1.4" fill="#006400"/><ellipse cx="194.2" cy="141.9" rx="0.9" ry="2.1" fill="#006400"/><ellipse cx="180.4" cy="157.5" rx="2.4" ry="1.0" fill="#006400"/><ellipse cx="187.0" cy="160.4" rx="1.7" ry="1.9" fill="#006400"/><ellipse cx="208.5" cy="138.7" rx="1.3" ry="1.3" fill="#006400"/><ellipse cx="181.7" cy="174.5" rx="2.1" ry="2.0" fill="#006400"/><ellipse cx="180.2" cy="172.2" rx="2.1" ry="1.6" fill="#006400"/><ellipse cx="206.0" cy="152.6" rx="1.2" ry="1.0" fill="#006400"/><ellipse cx="188.1" cy="131.9" rx="1.4" ry="2.1" fill="#006400"/><ellipse cx="204.3" cy="172.3" rx="2.0" ry="1.3" fill="#006400"/><ellipse cx="199.4" cy="151.8" rx="2.1" ry="1.7" fill="#006400"/><ellipse cx="189.3" cy="162.1" rx="2.4" ry="1.2" fill="#006400"/><ellipse cx="210.8" cy="130.8" rx="1.2" ry="1.2" fill="#006400"/><ellipse cx="206.0" cy="177.2" rx="2.1" ry="1.4" fill="#006400"/><ellipse cx="210.8" cy="146.4" rx="1.2" ry="2.3" fill="#006400"/><ellipse cx="202.1" cy="164.6" rx="1.9" ry="2.5" fill="#006400"/><ellipse cx="196.4" cy="172.0" rx="2.0" ry="2.3" fill="#006400"/><ellipse cx="195.3" cy="166.2" rx="1.8" ry="1.3" fill="#006400"/><ellipse cx="187.4" cy="161.1" rx="0.9" ry="2.3" fill="#006400"/><ellipse cx="185.1" cy="131.3" rx="1.0" ry="2.4" fill="#006400"/><ellipse cx="192.1" cy="137.1" rx="0.8" ry="0.9" fill="#006400"/><ellipse cx="204.2" cy="161.7" rx="2.0" ry="2.1" fill="#006400"/><ellipse cx="182.3" cy="159.5" rx="1.4" ry="2.2" fill="#006400"/><ellipse cx="208.7" cy="174.6" rx="0.9" ry="2.3" fill="#006400"/><ellipse cx="212.0" cy="177.2" rx="1.0" ry="1.1" fill="#006400"/><ellipse cx="183.9" cy="131.7" rx="2.2" ry="2.2" fill="#006400"/><ellipse cx="202.2" cy="171.3" rx="1.9" ry="1.3" fill="#006400"/><ellipse cx="183.5" cy="134.9" rx="2.1" ry="1.1" fill="#006400"/><ellipse cx="191.2" cy="151.2" rx="0.8" ry="1.2" fill="#006400"/><ellipse cx="189.9" cy="165.8" rx="1.4" ry="1.3" fill="#006400"/><ellipse cx="213.7" cy="155.2" rx="2.2" ry="1.9" fill="#006400"/><ellipse cx="212.9" cy="144.5" rx="1.0" ry="1.3" fill="#006400"/><ellipse cx="221.7" cy="154.7" rx="1.1" ry="0.8" fill="#006400"/><ellipse cx="236.1" cy="133.2" rx="1.3" ry="0.8" fill="#006400"/><ellipse cx="212.0" cy="137.1" rx="1.3" ry="1.5" fill="#006400"/><ellipse cx="212.1" cy="147.2" rx="1.0" ry="1.3" fill="#006400"/><ellipse cx="217.2" cy="147.3" rx="0.9" ry="1.3" fill="#006400"/><ellipse cx="219.3" cy="163.0" rx="0.9" ry="0.8" fill="#006400"/><ellipse cx="231.6" cy="147.4" rx="0.7" ry="1.2" fill="#006400"/><ellipse cx="214.3" cy="157.6" rx="1.2" ry="1.3" fill="#006400"/><ellipse cx="229.6" cy="142.4" rx="1.0" ry="1.0" fill="#006400"/><ellipse cx="236.9" cy="133.0" rx="1.4" ry="0.6" fill="#006400"/><ellipse cx="217.8" cy="139.2" rx="1.4" ry="1.1" fill="#006400"/><ellipse cx="222.6" cy="160.9" rx="0.8" ry="1.0" fill="#006400"/><ellipse cx="226.9" cy="156.4" rx="1.3" ry="1.2" fill="#006400"/><ellipse cx="221.8" cy="141.4" rx="0.7" ry="1.4" fill="#006400"/><ellipse cx="253.2" cy="234.0" rx="0.8" ry="1.1" fill="#1a6040"/><ellipse cx="256.1" cy="223.9" rx="0.8" ry="1.2" fill="#1a6040"/><ellipse cx="259.0" cy="202.8" rx="0.8" ry="1.0" fill="#1a6040"/><ellipse cx="254.3" cy="240.3" rx="0.8" ry="0.8" fill="#1a6040"/><ellipse cx="242.4" cy="208.2" rx="1.2" ry="0.8" fill="#1a6040"/><ellipse cx="244.5" cy="199.7" rx="1.8" ry="1.5" fill="#1a6040"/><ellipse cx="238.6" cy="247.7" rx="0.7" ry="1.1" fill="#1a6040"/><ellipse cx="261.6" cy="237.3" rx="1.5" ry="1.1" fill="#1a6040"/><ellipse cx="241.1" cy="227.6" rx="0.7" ry="0.8" fill="#1a6040"/><ellipse cx="246.1" cy="190.1" rx="1.1" ry="1.5" fill="#1a6040"/><ellipse cx="254.0" cy="219.0" rx="1.4" ry="1.2" fill="#1a6040"/><ellipse cx="239.7" cy="225.4" rx="1.1" ry="1.5" fill="#1a6040"/><ellipse cx="259.6" cy="214.7" rx="1.3" ry="1.5" fill="#1a6040"/><ellipse cx="247.0" cy="202.2" rx="1.5" ry="1.7" fill="#1a6040"/><ellipse cx="256.1" cy="231.4" rx="1.6" ry="1.4" fill="#1a6040"/><ellipse cx="252.7" cy="216.1" rx="1.0" ry="1.4" fill="#1a6040"/><ellipse cx="238.5" cy="214.0" rx="1.5" ry="1.5" fill="#1a6040"/><ellipse cx="252.4" cy="203.5" rx="1.1" ry="1.1" fill="#1a6040"/><ellipse cx="252.2" cy="213.4" rx="1.4" ry="1.7" fill="#1a6040"/><ellipse cx="240.8" cy="228.6" rx="1.5" ry="1.1" fill="#1a6040"/><ellipse cx="248.7" cy="248.4" rx="0.6" ry="1.3" fill="#1a6040"/><ellipse cx="240.2" cy="236.5" rx="1.7" ry="1.2" fill="#1a6040"/><ellipse cx="238.6" cy="223.6" rx="1.2" ry="1.5" fill="#1a6040"/><ellipse cx="249.3" cy="227.6" rx="1.6" ry="1.2" fill="#1a6040"/><ellipse cx="246.7" cy="246.8" rx="0.9" ry="1.4" fill="#1a6040"/><ellipse cx="246.2" cy="235.3" rx="0.7" ry="1.8" fill="#1a6040"/><ellipse cx="245.2" cy="191.5" rx="0.9" ry="1.1" fill="#1a6040"/><ellipse cx="236.3" cy="214.0" rx="1.1" ry="1.4" fill="#1a6040"/><ellipse cx="245.2" cy="204.4" rx="0.9" ry="1.5" fill="#1a6040"/><ellipse cx="260.4" cy="220.7" rx="0.9" ry="1.6" fill="#1a6040"/><ellipse cx="246.2" cy="201.1" rx="0.8" ry="1.5" fill="#1a6040"/><ellipse cx="257.0" cy="227.3" rx="1.2" ry="1.3" fill="#1a6040"/><ellipse cx="241.9" cy="247.8" rx="1.0" ry="1.4" fill="#1a6040"/><ellipse cx="257.3" cy="238.6" rx="1.2" ry="1.0" fill="#1a6040"/><ellipse cx="250.3" cy="195.8" rx="1.6" ry="1.0" fill="#1a6040"/><ellipse cx="258.1" cy="204.6" rx="1.1" ry="0.9" fill="#1a6040"/><ellipse cx="247.1" cy="199.5" rx="0.6" ry="1.5" fill="#1a6040"/><ellipse cx="243.3" cy="203.2" rx="1.0" ry="1.2" fill="#1a6040"/><ellipse cx="247.1" cy="227.5" rx="1.4" ry="1.0" fill="#1a6040"/><ellipse cx="260.1" cy="241.0" rx="0.7" ry="1.6" fill="#1a6040"/><ellipse cx="259.6" cy="236.6" rx="0.8" ry="1.6" fill="#1a6040"/><ellipse cx="252.5" cy="188.9" rx="0.6" ry="1.7" fill="#1a6040"/><ellipse cx="253.1" cy="203.5" rx="0.7" ry="0.8" fill="#1a6040"/><ellipse cx="242.1" cy="236.1" rx="1.0" ry="0.8" fill="#1a6040"/><ellipse cx="259.5" cy="237.1" rx="0.8" ry="1.7" fill="#1a6040"/><ellipse cx="251.8" cy="236.4" rx="1.4" ry="1.7" fill="#1a6040"/><ellipse cx="256.5" cy="240.0" rx="0.8" ry="1.4" fill="#1a6040"/><ellipse cx="249.8" cy="234.0" rx="1.1" ry="1.7" fill="#1a6040"/><ellipse cx="250.4" cy="204.4" rx="0.9" ry="0.8" fill="#1a6040"/><ellipse cx="248.8" cy="191.6" rx="1.2" ry="0.8" fill="#1a6040"/><ellipse cx="248.8" cy="218.9" rx="1.2" ry="1.6" fill="#1a6040"/><ellipse cx="236.2" cy="240.1" rx="1.2" ry="1.3" fill="#1a6040"/><ellipse cx="253.3" cy="240.1" rx="1.0" ry="1.1" fill="#1a6040"/><ellipse cx="261.0" cy="192.7" rx="1.4" ry="1.4" fill="#1a6040"/><ellipse cx="236.7" cy="225.8" rx="1.4" ry="1.7" fill="#1a6040"/><ellipse cx="244.6" cy="248.9" rx="1.2" ry="1.2" fill="#1a6040"/><ellipse cx="259.3" cy="190.1" rx="1.5" ry="1.4" fill="#1a6040"/><ellipse cx="244.8" cy="241.4" rx="1.0" ry="1.2" fill="#1a6040"/><ellipse cx="249.7" cy="235.8" rx="0.9" ry="1.1" fill="#1a6040"/><ellipse cx="247.0" cy="222.3" rx="1.6" ry="1.0" fill="#1a6040"/><ellipse cx="257.5" cy="213.0" rx="1.2" ry="0.9" fill="#1a6040"/><ellipse cx="249.2" cy="248.4" rx="1.4" ry="1.6" fill="#1a6040"/><ellipse cx="244.6" cy="207.7" rx="1.0" ry="1.3" fill="#1a6040"/><ellipse cx="252.5" cy="236.6" rx="0.6" ry="1.5" fill="#1a6040"/><ellipse cx="259.0" cy="221.8" rx="0.7" ry="1.0" fill="#1a6040"/><ellipse cx="236.2" cy="199.8" rx="1.7" ry="1.3" fill="#1a6040"/><ellipse cx="253.1" cy="236.9" rx="1.7" ry="1.3" fill="#1a6040"/><ellipse cx="252.0" cy="226.9" rx="1.4" ry="1.3" fill="#1a6040"/><ellipse cx="253.7" cy="201.2" rx="1.4" ry="1.1" fill="#1a6040"/><ellipse cx="255.8" cy="194.3" rx="0.8" ry="0.6" fill="#1a6040"/><ellipse cx="256.1" cy="244.7" rx="1.4" ry="1.0" fill="#1a6040"/><ellipse cx="257.4" cy="236.8" rx="1.3" ry="0.9" fill="#1a6040"/><ellipse cx="243.9" cy="214.2" rx="1.0" ry="1.1" fill="#1a6040"/><ellipse cx="252.7" cy="245.9" rx="0.7" ry="1.3" fill="#1a6040"/><ellipse cx="237.0" cy="195.4" rx="1.6" ry="1.3" fill="#1a6040"/><ellipse cx="259.9" cy="215.7" rx="0.6" ry="1.1" fill="#1a6040"/><ellipse cx="251.4" cy="246.1" rx="1.8" ry="1.2" fill="#1a6040"/><ellipse cx="246.7" cy="194.3" rx="1.4" ry="0.9" fill="#1a6040"/><ellipse cx="239.9" cy="189.0" rx="0.6" ry="1.4" fill="#1a6040"/><ellipse cx="239.2" cy="247.9" rx="0.7" ry="1.6" fill="#1a6040"/><ellipse cx="239.4" cy="189.1" rx="1.5" ry="0.9" fill="#1a6040"/><ellipse cx="255.1" cy="199.6" rx="0.7" ry="1.5" fill="#1a6040"/><ellipse cx="254.6" cy="241.0" rx="1.5" ry="0.7" fill="#1a6040"/><ellipse cx="252.3" cy="232.0" rx="1.2" ry="1.7" fill="#1a6040"/><ellipse cx="242.6" cy="247.8" rx="1.5" ry="0.6" fill="#1a6040"/><ellipse cx="236.4" cy="228.3" rx="1.6" ry="0.7" fill="#1a6040"/><ellipse cx="244.1" cy="233.2" rx="0.8" ry="1.6" fill="#1a6040"/><ellipse cx="248.6" cy="191.7" rx="1.0" ry="1.3" fill="#1a6040"/><ellipse cx="247.4" cy="230.0" rx="0.8" ry="1.6" fill="#1a6040"/><ellipse cx="245.4" cy="228.0" rx="1.4" ry="1.1" fill="#1a6040"/><ellipse cx="228.9" cy="234.6" rx="1.5" ry="1.4" fill="#1a6040"/><ellipse cx="232.2" cy="226.7" rx="0.7" ry="1.6" fill="#1a6040"/><ellipse cx="234.7" cy="235.2" rx="0.9" ry="1.2" fill="#1a6040"/><ellipse cx="239.6" cy="235.3" rx="1.2" ry="0.9" fill="#1a6040"/><ellipse cx="229.7" cy="236.2" rx="1.0" ry="1.3" fill="#1a6040"/><ellipse cx="232.8" cy="236.3" rx="1.4" ry="0.9" fill="#1a6040"/><ellipse cx="222.0" cy="226.2" rx="1.0" ry="1.2" fill="#1a6040"/><ellipse cx="236.7" cy="236.2" rx="0.6" ry="1.4" fill="#1a6040"/><ellipse cx="236.6" cy="235.9" rx="1.2" ry="0.9" fill="#1a6040"/><ellipse cx="237.3" cy="234.9" rx="1.3" ry="1.5" fill="#1a6040"/><ellipse cx="228.2" cy="223.4" rx="1.2" ry="1.4" fill="#1a6040"/><ellipse cx="225.6" cy="234.0" rx="1.5" ry="0.8" fill="#1a6040"/><ellipse cx="232.9" cy="232.8" rx="1.1" ry="0.8" fill="#1a6040"/><ellipse cx="226.6" cy="234.0" rx="1.4" ry="1.1" fill="#1a6040"/><ellipse cx="223.6" cy="234.9" rx="1.4" ry="0.8" fill="#1a6040"/><ellipse cx="232.4" cy="236.4" rx="1.5" ry="1.1" fill="#1a6040"/><ellipse cx="230.6" cy="231.4" rx="0.8" ry="0.8" fill="#1a6040"/><ellipse cx="225.3" cy="233.2" rx="1.0" ry="1.2" fill="#1a6040"/><ellipse cx="229.2" cy="230.3" rx="0.7" ry="0.6" fill="#1a6040"/><ellipse cx="239.9" cy="228.0" rx="0.7" ry="1.2" fill="#1a6040"/><ellipse cx="236.2" cy="224.5" rx="1.2" ry="0.9" fill="#1a6040"/><ellipse cx="231.4" cy="222.3" rx="0.6" ry="1.6" fill="#1a6040"/><ellipse cx="237.6" cy="229.8" rx="1.2" ry="0.9" fill="#1a6040"/><ellipse cx="236.0" cy="228.8" rx="1.5" ry="1.4" fill="#1a6040"/><ellipse cx="236.7" cy="237.4" rx="0.9" ry="0.6" fill="#1a6040"/><ellipse fill="#1a6040" cx="238.5" cy="176" rx="2" ry="7" transform="rotate(15 238.5 176)"/><ellipse cx="226.2" cy="208.0" rx="0.9" ry="0.9" fill="#1a6040"/><ellipse cx="230.1" cy="215.6" rx="1.3" ry="1.7" fill="#1a6040"/><ellipse cx="234.0" cy="206.7" rx="1.4" ry="1.2" fill="#1a6040"/><ellipse cx="225.3" cy="216.6" rx="1.1" ry="1.4" fill="#1a6040"/><ellipse cx="231.0" cy="216.5" rx="1.5" ry="1.2" fill="#1a6040"/><ellipse cx="228.9" cy="207.8" rx="1.8" ry="1.8" fill="#1a6040"/><ellipse cx="226.4" cy="206.4" rx="1.1" ry="1.2" fill="#1a6040"/><ellipse cx="233.9" cy="216.0" rx="1.6" ry="0.8" fill="#1a6040"/><ellipse cx="232.7" cy="213.8" rx="1.4" ry="1.8" fill="#1a6040"/><ellipse cx="224.6" cy="207.6" rx="1.6" ry="1.7" fill="#1a6040"/><ellipse cx="231.4" cy="209.3" rx="1.4" ry="1.6" fill="#1a6040"/><ellipse cx="225.2" cy="209.6" rx="1.1" ry="0.9" fill="#1a6040"/><ellipse cx="255.8" cy="200.1" rx="1.1" ry="1.0" fill="#1a6040"/><ellipse cx="258.1" cy="190.8" rx="1.7" ry="1.0" fill="#1a6040"/><ellipse cx="250.4" cy="245.7" rx="1.1" ry="1.9" fill="#1a6040"/><ellipse cx="260.4" cy="243.3" rx="1.0" ry="1.3" fill="#1a6040"/><ellipse cx="251.2" cy="245.7" rx="1.8" ry="1.6" fill="#1a6040"/><ellipse cx="255.4" cy="210.4" rx="1.8" ry="1.4" fill="#1a6040"/><ellipse cx="257.5" cy="198.6" rx="1.1" ry="0.9" fill="#1a6040"/><ellipse cx="258.6" cy="223.2" rx="1.0" ry="1.8" fill="#1a6040"/><ellipse cx="253.2" cy="214.7" rx="1.0" ry="1.1" fill="#1a6040"/><ellipse cx="260.1" cy="210.1" rx="1.0" ry="1.4" fill="#1a6040"/><ellipse cx="253.8" cy="244.2" rx="0.9" ry="2.0" fill="#1a6040"/><ellipse cx="250.7" cy="243.7" rx="1.6" ry="1.1" fill="#1a6040"/><ellipse cx="255.7" cy="207.2" rx="1.1" ry="1.0" fill="#1a6040"/><ellipse cx="254.4" cy="249.5" rx="2.0" ry="1.9" fill="#1a6040"/><ellipse cx="251.2" cy="207.4" rx="1.9" ry="0.9" fill="#1a6040"/><ellipse cx="258.7" cy="207.6" rx="2.0" ry="0.8" fill="#1a6040"/><ellipse cx="259.7" cy="210.5" rx="1.0" ry="0.8" fill="#1a6040"/><ellipse cx="260.0" cy="221.6" rx="1.0" ry="1.3" fill="#1a6040"/><ellipse cx="260.9" cy="203.1" rx="1.5" ry="1.0" fill="#1a6040"/><ellipse cx="252.2" cy="236.2" rx="1.7" ry="1.0" fill="#1a6040"/><ellipse cx="251.0" cy="195.2" rx="1.5" ry="1.4" fill="#1a6040"/><ellipse cx="253.3" cy="202.4" rx="1.5" ry="1.6" fill="#1a6040"/><ellipse cx="259.7" cy="225.0" rx="1.0" ry="0.9" fill="#1a6040"/><ellipse cx="258.8" cy="214.5" rx="1.7" ry="0.9" fill="#1a6040"/><ellipse cx="259.7" cy="210.1" rx="1.8" ry="1.8" fill="#1a6040"/><ellipse cx="255.9" cy="190.9" rx="1.9" ry="1.4" fill="#1a6040"/><ellipse cx="260.5" cy="206.0" rx="1.0" ry="1.8" fill="#1a6040"/><ellipse cx="254.4" cy="199.8" rx="1.2" ry="1.5" fill="#1a6040"/><ellipse cx="250.1" cy="221.2" rx="1.3" ry="1.4" fill="#1a6040"/><ellipse cx="251.4" cy="232.9" rx="1.8" ry="1.8" fill="#1a6040"/><ellipse cx="253.9" cy="232.7" rx="1.3" ry="1.7" fill="#1a6040"/><ellipse cx="250.7" cy="242.4" rx="1.9" ry="1.4" fill="#1a6040"/><ellipse cx="256.2" cy="221.8" rx="1.4" ry="0.8" fill="#1a6040"/><ellipse cx="261.6" cy="203.4" rx="1.0" ry="0.9" fill="#1a6040"/><ellipse cx="253.0" cy="239.0" rx="0.8" ry="0.9" fill="#1a6040"/><ellipse cx="258.4" cy="201.7" rx="0.8" ry="1.5" fill="#1a6040"/><ellipse cx="256.9" cy="221.4" rx="1.6" ry="0.9" fill="#1a6040"/><ellipse cx="260.4" cy="233.0" rx="0.9" ry="0.9" fill="#1a6040"/><ellipse cx="255.9" cy="220.0" rx="1.1" ry="0.9" fill="#1a6040"/><ellipse cx="254.9" cy="198.2" rx="1.5" ry="1.8" fill="#1a6040"/><polygon fill="#ffff00" points="158,131 166,128.5 176,128 185,129.5 189,135 184,148 180,162 171,173 162,184 169,202 178,219 187,239 193,255 198,270 84,270 78,262 62,255 53,246 58,237 71,228 82,216 89,213 107,209 120,201 126,195 124,189 126,178 128,169 135,166 144,160.5 151,153 153,141 156,135"/><polygon fill="#ff9a00" points="139.9,183.9 151,186.1 155.4,201.7 164.3,223.9 173.2,243.9 182.1,270 95.6,270 88.9,263.9 86.7,255 91.1,246.1 95.6,237.2 102.2,228.3 111.1,219.4 124.4,210.6 135,208.3 142.1,208.3 144.3,192.8"/><ellipse fill="#006400" cx="105.6" cy="178.3" rx="17.8" ry="13.5" transform="rotate(18 105.6 178.3)"/><ellipse fill="#006400" cx="185.4" cy="198.3" rx="7.8" ry="3.5" transform="rotate(-10 185.4 198.3)"/><polygon fill="#e8f000" points="223,109 230,104 236,103 240,108 241,116 238,124 232,127 226,126 222,118"/><ellipse cx="224.9" cy="139.7" rx="1.3" ry="0.8" fill="#e8f000"/><ellipse cx="238.5" cy="148.5" rx="1.0" ry="1.0" fill="#e8f000"/><ellipse cx="238.8" cy="138.6" rx="1.0" ry="1.5" fill="#e8f000"/><ellipse cx="237.5" cy="134.1" rx="0.8" ry="0.9" fill="#e8f000"/><ellipse cx="230.7" cy="149.5" rx="1.4" ry="1.5" fill="#e8f000"/><ellipse cx="238.3" cy="146.3" rx="0.7" ry="1.1" fill="#e8f000"/><ellipse cx="241.2" cy="148.4" rx="0.8" ry="1.0" fill="#e8f000"/><ellipse cx="234.7" cy="134.7" rx="1.1" ry="0.7" fill="#e8f000"/><ellipse cx="230.7" cy="138.1" rx="0.6" ry="0.7" fill="#e8f000"/><ellipse cx="241.4" cy="144.6" rx="1.5" ry="1.2" fill="#e8f000"/><ellipse cx="238.2" cy="147.2" rx="1.5" ry="0.6" fill="#e8f000"/><ellipse cx="234.8" cy="132.4" rx="1.3" ry="0.9" fill="#e8f000"/><ellipse cx="232.8" cy="148.2" rx="1.2" ry="0.9" fill="#e8f000"/><ellipse cx="232.4" cy="136.4" rx="1.6" ry="0.9" fill="#e8f000"/><ellipse cx="228.1" cy="141.5" rx="0.7" ry="1.2" fill="#e8f000"/><ellipse cx="241.1" cy="138.3" rx="0.9" ry="1.1" fill="#e8f000"/><ellipse cx="232.7" cy="129.6" rx="0.7" ry="0.7" fill="#e8f000"/><ellipse cx="227.9" cy="135.8" rx="0.9" ry="0.8" fill="#e8f000"/><ellipse fill="#ffb000" cx="232" cy="113" rx="3.5" ry="4.5" transform="rotate(0 232 113)"/><ellipse cx="63.1" cy="247.5" rx="1.8" ry="1.5" fill="#006400"/><ellipse cx="80.0" cy="250.8" rx="1.0" ry="1.7" fill="#006400"/><ellipse cx="76.1" cy="247.5" rx="1.5" ry="1.4" fill="#006400"/><ellipse cx="70.9" cy="237.8" rx="1.1" ry="1.4" fill="#006400"/><ellipse cx="73.4" cy="248.7" rx="0.8" ry="1.2" fill="#006400"/><ellipse cx="90.2" cy="237.6" rx="1.5" ry="1.4" fill="#006400"/><ellipse cx="70.0" cy="261.6" rx="1.2" ry="1.7" fill="#006400"/><ellipse cx="65.5" cy="232.1" rx="1.8" ry="1.3" fill="#006400"/><ellipse cx="62.2" cy="242.4" rx="1.3" ry="1.7" fill="#006400"/><ellipse cx="63.8" cy="237.2" rx="2.0" ry="1.7" fill="#006400"/><ellipse cx="65.4" cy="240.8" rx="1.2" ry="1.6" fill="#006400"/><ellipse cx="81.6" cy="257.2" rx="1.8" ry="1.4" fill="#006400"/><ellipse cx="85.9" cy="253.8" rx="1.7" ry="1.4" fill="#006400"/><ellipse cx="87.5" cy="252.7" rx="1.9" ry="1.0" fill="#006400"/><ellipse cx="90.5" cy="230.1" rx="1.7" ry="1.5" fill="#006400"/><path d="M100,23 C95,26 92,29 88,32 C80,38 74,42 68,47 C62,52 58,56 50,57 C40,58 34,60 32,66 C30,74 34,80 42,84 C50,88 56,92 62,100" fill="none" stroke="#3a8090" stroke-width="0.8"/><path d="M120,109 C110,112 100,116 88,121 C78,127 66,140 56,148 C50,158 46,168 40,175" fill="none" stroke="#3a8090" stroke-width="0.6"/><path d="M100,53 C110,48 116,44 121,32 C125,26 130,20 140,18" fill="none" stroke="#3a8090" stroke-width="0.6"/><path d="M131,51 C140,49 148,46 152,48 C156,52 160,56 171,58 C170,64 169,70 167,74 C163,80 158,86 158,89 C165,94 170,97 176,98 C182,99 188,100 190,104 C193,110 193,115 187,122 C185,126 186,130 190,134" fill="none" stroke="#3a8090" stroke-width="0.7"/><path d="M249,0 C246,15 244,30 236,40 C222,48 210,52 200,62 C210,75 225,95 232,110 C238,125 240,140 236,160" fill="none" stroke="#3a8090" stroke-width="0.6"/><path d="M64,172 C66,180 68,188 71,194 C74,202 78,210 84,218 C88,224 92,230 96,240 C98,250 94,262 96,270" fill="none" stroke="#3a8090" stroke-width="0.7"/><ellipse fill="#3a7aa0" cx="56" cy="217" rx="3" ry="4" transform="rotate(-20 56 217)"/><path d="M35,225 C40,228 44,232 46,240" fill="none" stroke="#3a8090" stroke-width="0.7"/><path d="M0,32 C40,36 80,40 135,44 C180,46 220,47 263,48" fill="none" stroke="rgba(90,90,90,0.55)" stroke-width="0.5"/><path d="M0,146 C40,150 90,155 135,159 C180,161 220,162 263,163" fill="none" stroke="rgba(90,90,90,0.55)" stroke-width="0.5"/><path d="M0,259 C50,263 110,268 170,271" fill="none" stroke="rgba(90,90,90,0.55)" stroke-width="0.5"/><path d="M82,0 L69,135 L60,270" fill="none" stroke="rgba(90,90,90,0.55)" stroke-width="0.5"/><path d="M166.6,0 L159.5,135 L153,270" fill="none" stroke="rgba(90,90,90,0.55)" stroke-width="0.5"/><path d="M250.5,0 L250,270" fill="none" stroke="rgba(90,90,90,0.55)" stroke-width="0.6"/><path d="M111.2,58.2H113.7L112.5,64.9Z" fill="#000" transform="rotate(-43 112.5 61.6)"/><path d="M115.5,57.1H118.1L116.8,63.9Z" fill="#000" transform="rotate(-45 116.8 60.5)"/><path d="M110.4,51.9H113.1L111.8,59.1Z" fill="#000" transform="rotate(-48 111.8 55.5)"/><path d="M96.3,67.4H98.6L97.5,73.5Z" fill="#000" transform="rotate(-57 97.5 70.4)"/><path d="M101.8,69.5H104.3L103.0,76.0Z" fill="#000" transform="rotate(-52 103.0 72.8)"/><path d="M93.5,65.7H95.6L94.6,71.1Z" fill="#000" transform="rotate(-47 94.6 68.4)"/><path d="M112.6,94.4H116.3L114.5,104.1Z" fill="#000" transform="rotate(-70 114.5 99.2)"/><path d="M117.3,104.8H121.0L119.2,114.7Z" fill="#000" transform="rotate(-74 119.2 109.7)"/><path d="M110.5,107.7H112.8L111.7,113.8Z" fill="#000" transform="rotate(-79 111.7 110.7)"/><path d="M112.3,100.1H116.0L114.2,109.8Z" fill="#000" transform="rotate(-57 114.2 105.0)"/><path d="M112.2,107.9H115.2L113.7,116.0Z" fill="#000" transform="rotate(-64 113.7 112.0)"/><path d="M114.9,99.7H117.7L116.3,107.2Z" fill="#000" transform="rotate(-62 116.3 103.5)"/><path d="M125.7,26.4H128.0L126.9,32.4Z" fill="#000" transform="rotate(-19 126.9 29.4)"/><path d="M123.1,19.9H125.1L124.1,25.1Z" fill="#000" transform="rotate(-18 124.1 22.5)"/><path d="M128.0,25.1H130.6L129.3,32.0Z" fill="#000" transform="rotate(-21 129.3 28.6)"/><path d="M26.2,122.6H28.5L27.4,128.6Z" fill="#000" transform="rotate(-13 27.4 125.6)"/><path d="M30.7,128.6H32.0L31.3,132.2Z" fill="#000" transform="rotate(-14 31.3 130.4)"/><path d="M50.2,128.4H51.9L51.1,132.9Z" fill="#000" transform="rotate(-24 51.1 130.7)"/><path d="M46.3,124.5H48.4L47.4,130.0Z" fill="#000" transform="rotate(20 47.4 127.2)"/><path d="M46.4,118.8H47.7L47.1,122.3Z" fill="#000" transform="rotate(-16 47.1 120.5)"/><path d="M29.8,120.8H31.2L30.5,124.4Z" fill="#000" transform="rotate(-21 30.5 122.6)"/><path d="M35.0,123.0H36.5L35.7,127.1Z" fill="#000" transform="rotate(20 35.7 125.1)"/><path d="M35.2,108.9H36.8L36.0,113.2Z" fill="#000" transform="rotate(9 36.0 111.1)"/><path d="M20.9,125.8H22.1L21.5,128.8Z" fill="#000" transform="rotate(-15 21.5 127.3)"/><path d="M44.1,122.2H46.0L45.1,127.2Z" fill="#000" transform="rotate(-20 45.1 124.7)"/><path d="M29.2,121.9H30.6L29.9,125.7Z" fill="#000" transform="rotate(2 29.9 123.8)"/><path d="M30.5,132.6H32.3L31.4,137.3Z" fill="#000" transform="rotate(-9 31.4 134.9)"/><path d="M12.5,171.2H14.5L13.5,176.4Z" fill="#000" transform="rotate(-16 13.5 173.8)"/><path d="M11.1,172.0H12.9L12.0,176.6Z" fill="#000" transform="rotate(13 12.0 174.3)"/><path d="M47.3,196.3H48.5L47.9,199.4Z" fill="#000" transform="rotate(-20 47.9 197.8)"/><path d="M58.0,177.4H59.9L58.9,182.5Z" fill="#000" transform="rotate(-6 58.9 179.9)"/><path d="M16.2,176.2H17.5L16.9,179.5Z" fill="#000" transform="rotate(16 16.9 177.9)"/><path d="M44.9,178.7H46.6L45.8,183.1Z" fill="#000" transform="rotate(-5 45.8 180.9)"/><path d="M7.9,198.6H9.7L8.8,203.3Z" fill="#000" transform="rotate(18 8.8 201.0)"/><path d="M35.1,189.1H36.5L35.8,192.8Z" fill="#000" transform="rotate(-18 35.8 190.9)"/><path d="M69.4,197.7H70.9L70.2,201.6Z" fill="#000" transform="rotate(16 70.2 199.6)"/><path d="M61.2,176.8H63.0L62.1,181.6Z" fill="#000" transform="rotate(18 62.1 179.2)"/><path d="M39.0,201.3H40.4L39.7,205.0Z" fill="#000" transform="rotate(-4 39.7 203.1)"/><path d="M54.5,174.2H56.0L55.3,178.2Z" fill="#000" transform="rotate(15 55.3 176.2)"/><path d="M38.2,195.5H39.6L38.9,199.2Z" fill="#000" transform="rotate(-13 38.9 197.3)"/><path d="M29.0,171.9H31.2L30.1,177.9Z" fill="#000" transform="rotate(-8 30.1 174.9)"/><path d="M43.4,170.0H45.2L44.3,174.6Z" fill="#000" transform="rotate(-5 44.3 172.3)"/><path d="M32.6,168.7H33.9L33.2,172.1Z" fill="#000" transform="rotate(13 33.2 170.4)"/><path d="M28.9,175.3H30.3L29.6,178.8Z" fill="#000" transform="rotate(-9 29.6 177.1)"/><path d="M20.7,166.8H22.6L21.6,171.8Z" fill="#000" transform="rotate(-6 21.6 169.3)"/><path d="M15.3,192.5H16.5L15.9,195.8Z" fill="#000" transform="rotate(-9 15.9 194.1)"/><path d="M62.6,170.6H64.3L63.5,174.9Z" fill="#000" transform="rotate(13 63.5 172.7)"/><path d="M60.6,171.9H62.1L61.3,175.9Z" fill="#000" transform="rotate(9 61.3 173.9)"/><path d="M30.7,201.6H32.1L31.4,205.3Z" fill="#000" transform="rotate(18 31.4 203.5)"/><path d="M31.9,210.8H33.6L32.8,215.1Z" fill="#000" transform="rotate(-15 32.8 213.0)"/><path d="M42.8,211.3H44.9L43.9,217.0Z" fill="#000" transform="rotate(4 43.9 214.1)"/><path d="M24.3,211.2H26.2L25.2,216.0Z" fill="#000" transform="rotate(-11 25.2 213.6)"/><path d="M52.1,207.0H53.8L53.0,211.6Z" fill="#000" transform="rotate(2 53.0 209.3)"/><path d="M19.1,229.9H20.7L19.9,234.1Z" fill="#000" transform="rotate(6 19.9 232.0)"/><path d="M35.4,213.8H37.0L36.2,218.0Z" fill="#000" transform="rotate(-17 36.2 215.9)"/><path d="M14.0,232.8H15.5L14.7,236.8Z" fill="#000" transform="rotate(7 14.7 234.8)"/><path d="M10.2,222.6H11.8L11.0,226.7Z" fill="#000" transform="rotate(0 11.0 224.7)"/><path d="M20.6,205.3H22.1L21.3,209.3Z" fill="#000" transform="rotate(-11 21.3 207.3)"/><path d="M11.2,228.2H12.7L11.9,232.0Z" fill="#000" transform="rotate(-4 11.9 230.1)"/><path d="M90.6,237.2H93.9L92.3,245.7Z" fill="#000" transform="rotate(14 92.3 241.4)"/><path d="M68.0,219.9H69.9L69.0,225.1Z" fill="#000" transform="rotate(7 69.0 222.5)"/><path d="M83.6,222.0H86.2L84.9,228.7Z" fill="#000" transform="rotate(6 84.9 225.4)"/><path d="M84.4,217.2H87.6L86.0,225.6Z" fill="#000" transform="rotate(-6 86.0 221.4)"/><path d="M82.8,216.2H84.9L83.9,221.6Z" fill="#000" transform="rotate(17 83.9 218.9)"/><path d="M86.0,236.5H88.0L87.0,241.7Z" fill="#000" transform="rotate(-18 87.0 239.1)"/><path d="M68.7,216.4H71.0L69.9,222.6Z" fill="#000" transform="rotate(-5 69.9 219.5)"/><path d="M64.7,220.0H67.6L66.2,227.6Z" fill="#000" transform="rotate(-13 66.2 223.8)"/><path d="M88.7,229.7H91.7L90.2,237.6Z" fill="#000" transform="rotate(-10 90.2 233.7)"/><path d="M76.8,234.8H79.3L78.0,241.2Z" fill="#000" transform="rotate(-20 78.0 238.0)"/><path d="M88.9,238.4H91.2L90.0,244.6Z" fill="#000" transform="rotate(-18 90.0 241.5)"/><path d="M89.6,232.5H91.6L90.6,237.7Z" fill="#000" transform="rotate(-10 90.6 235.1)"/><path d="M67.2,239.2H69.4L68.3,245.0Z" fill="#000" transform="rotate(17 68.3 242.1)"/><path d="M86.0,211.4H89.0L87.5,219.2Z" fill="#000" transform="rotate(-4 87.5 215.3)"/><path d="M64.8,262.8H66.6L65.7,267.7Z" fill="#000" transform="rotate(-16 65.7 265.3)"/><path d="M67.8,255.4H70.4L69.1,262.2Z" fill="#000" transform="rotate(8 69.1 258.8)"/><path d="M64.4,262.3H66.7L65.6,268.2Z" fill="#000" transform="rotate(-2 65.6 265.3)"/><path d="M52.9,260.5H54.9L53.9,265.8Z" fill="#000" transform="rotate(0 53.9 263.2)"/><path d="M67.6,250.9H70.0L68.8,257.2Z" fill="#000" transform="rotate(-18 68.8 254.0)"/><path d="M163.4,32.5H164.7L164.0,36.0Z" fill="#000" transform="rotate(-7 164.0 34.2)"/><path d="M175.8,25.5H177.3L176.6,29.5Z" fill="#000" transform="rotate(-25 176.6 27.5)"/><path d="M133.1,14.4H134.5L133.8,18.2Z" fill="#000" transform="rotate(-28 133.8 16.3)"/><path d="M144.8,5.3H146.4L145.6,9.7Z" fill="#000" transform="rotate(0 145.6 7.5)"/><path d="M141.4,9.7H142.9L142.2,13.7Z" fill="#000" transform="rotate(-13 142.2 11.7)"/><path d="M174.3,14.3H175.7L175.0,17.9Z" fill="#000" transform="rotate(13 175.0 16.1)"/><path d="M137.0,22.7H138.4L137.7,26.4Z" fill="#000" transform="rotate(9 137.7 24.5)"/><path d="M156.1,30.8H157.4L156.8,34.1Z" fill="#000" transform="rotate(-0 156.8 32.4)"/><path d="M158.3,18.2H160.0L159.1,22.7Z" fill="#000" transform="rotate(10 159.1 20.4)"/><path d="M135.7,11.7H137.1L136.4,15.4Z" fill="#000" transform="rotate(-28 136.4 13.6)"/><path d="M133.2,11.5H134.5L133.8,14.9Z" fill="#000" transform="rotate(2 133.8 13.2)"/><path d="M151.4,4.7H152.8L152.1,8.3Z" fill="#000" transform="rotate(-12 152.1 6.5)"/><path d="M147.5,7.2H148.7L148.1,10.3Z" fill="#000" transform="rotate(-39 148.1 8.7)"/><path d="M177.0,30.4H178.2L177.6,33.6Z" fill="#000" transform="rotate(3 177.6 32.0)"/><path d="M176.5,22.9H177.7L177.1,26.2Z" fill="#000" transform="rotate(-11 177.1 24.5)"/><path d="M150.6,7.5H152.2L151.4,11.6Z" fill="#000" transform="rotate(-40 151.4 9.6)"/><path d="M227.8,85.0H230.4L229.1,91.9Z" fill="#000" transform="rotate(-61 229.1 88.4)"/><path d="M225.1,81.6H227.3L226.2,87.4Z" fill="#000" transform="rotate(-77 226.2 84.5)"/><path d="M228.0,100.7H230.4L229.2,107.2Z" fill="#000" transform="rotate(-54 229.2 104.0)"/><path d="M229.1,99.5H231.5L230.3,106.0Z" fill="#000" transform="rotate(-41 230.3 102.7)"/><path d="M191.3,103.7H193.8L192.5,110.2Z" fill="#000" transform="rotate(-58 192.5 107.0)"/><path d="M195.6,95.3H198.1L196.8,101.8Z" fill="#000" transform="rotate(-70 196.8 98.6)"/><path d="M197.0,101.2H198.9L198.0,106.3Z" fill="#000" transform="rotate(-55 198.0 103.7)"/><path d="M193.4,93.7H195.5L194.5,99.4Z" fill="#000" transform="rotate(-61 194.5 96.6)"/><path d="M208.9,102.5H211.4L210.1,109.2Z" fill="#000" transform="rotate(-52 210.1 105.9)"/><path d="M200.5,100.8H202.2L201.3,105.2Z" fill="#000" transform="rotate(-71 201.3 103.0)"/><path d="M202.5,94.1H204.8L203.7,100.2Z" fill="#000" transform="rotate(-75 203.7 97.1)"/><path d="M223.4,164.0H225.4L224.4,169.4Z" fill="#000" transform="rotate(-79 224.4 166.7)"/><path d="M222.8,128.4H225.8L224.3,136.3Z" fill="#000" transform="rotate(-80 224.3 132.4)"/><path d="M234.0,157.6H237.1L235.5,165.7Z" fill="#000" transform="rotate(-67 235.5 161.6)"/><path d="M218.6,149.6H221.3L219.9,156.6Z" fill="#000" transform="rotate(-67 219.9 153.1)"/><path d="M220.0,139.5H222.9L221.5,147.1Z" fill="#000" transform="rotate(-55 221.5 143.3)"/><path d="M236.1,128.1H238.5L237.3,134.3Z" fill="#000" transform="rotate(-67 237.3 131.2)"/><path d="M226.7,136.4H228.9L227.8,142.2Z" fill="#000" transform="rotate(-77 227.8 139.3)"/><path d="M219.4,139.8H222.8L221.1,148.7Z" fill="#000" transform="rotate(-53 221.1 144.3)"/><path d="M234.6,162.4H237.9L236.2,171.3Z" fill="#000" transform="rotate(-61 236.2 166.9)"/><path d="M233.2,122.8H236.2L234.7,130.5Z" fill="#000" transform="rotate(-62 234.7 126.6)"/><path d="M202.2,165.3H205.5L203.9,174.1Z" fill="#000" transform="rotate(-66 203.9 169.7)"/><path d="M207.1,163.5H209.8L208.4,170.5Z" fill="#000" transform="rotate(-53 208.4 167.0)"/><path d="M219.2,137.0H221.8L220.5,144.0Z" fill="#000" transform="rotate(-71 220.5 140.5)"/><path d="M220.4,151.1H222.7L221.5,157.2Z" fill="#000" transform="rotate(-68 221.5 154.2)"/><path d="M226.2,147.0H228.8L227.5,153.7Z" fill="#000" transform="rotate(-72 227.5 150.4)"/><path d="M220.6,136.4H223.5L222.1,144.1Z" fill="#000" transform="rotate(-69 222.1 140.2)"/><path d="M220.9,157.1H223.1L222.0,162.9Z" fill="#000" transform="rotate(-78 222.0 160.0)"/></svg>
<div class="a t" style="left:563px;top:142px;font-size:3.6px;color:#888">120°0′0″E</div>
<div class="a" style="left:571px;top:147px;width:0.6px;height:2px;background:#888"></div>
<div class="a t" style="left:647px;top:142px;font-size:3.6px;color:#888">120°0′0″E</div>
<div class="a" style="left:655px;top:147px;width:0.6px;height:2px;background:#888"></div>
<div class="a t" style="left:731px;top:142px;font-size:3.6px;color:#888">120°0′0″E</div>
<div class="a" style="left:739px;top:147px;width:0.6px;height:2px;background:#888"></div>
<div class="a t" style="left:535px;top:421px;font-size:3.6px;color:#888">120°0′0″E</div>
<div class="a t" style="left:633px;top:421px;font-size:3.6px;color:#888">120°0′0″E</div>
<div class="a t" style="left:731px;top:421px;font-size:3.6px;color:#888">120°0′0″E</div>
<div class="a t" style="left:469px;top:178px;font-size:3.6px;color:#888">40°0′0″N</div>
<div class="a t" style="left:469px;top:291px;font-size:3.6px;color:#888">40°0′0″N</div>
<div class="a t" style="left:469px;top:406px;font-size:3.6px;color:#888">40°0′0″N</div>
<div class="a t" style="left:754px;top:197px;font-size:3.6px;color:#888">40°0′0″N</div>
<div class="a t" style="left:754px;top:312px;font-size:3.6px;color:#888">40°0′0″N</div>
<div class="a t" style="left:488px;top:456px;font-size:7px;color:#222">制图者： 孙克染</div>
<div class="a t" style="left:488px;top:470px;font-size:7px;color:#222;letter-spacing:0.3px">说明： 本地图中的风向与气象学上定义的风向不同，</div>
<div class="a t" style="left:511px;top:479px;font-size:7px;color:#222;letter-spacing:0.3px">是风流动的方向。</div>
<div class="a t" style="left:489px;top:492px;font-size:5.5px;color:#333">0</div>
<div class="a t" style="left:506px;top:492px;font-size:5.5px;color:#333">100</div>
<div class="a t" style="left:526px;top:492px;font-size:5.5px;color:#333">200</div>
<div class="a t" style="left:567px;top:492px;font-size:5.5px;color:#333">400</div>
<div class="a t" style="left:608px;top:492px;font-size:5.5px;color:#333">600</div>
<div class="a t" style="left:650px;top:492px;font-size:5.5px;color:#333">800</div>
<div class="a" style="left:490px;top:498px;width:164px;height:4px;background:#000"></div>
<div class="a" style="left:500px;top:499px;width:10px;height:2px;background:#fff"></div>
<div class="a" style="left:521px;top:499px;width:10px;height:2px;background:#fff"></div>
<div class="a" style="left:572px;top:499px;width:41px;height:2px;background:#fff"></div>
<div class="a t" style="left:656px;top:498px;font-size:4px;color:#333">千米</div>
<div class="a t" style="left:670px;top:425px;font-size:8px;font-weight:bold;color:#111">图例</div>
<svg class="a" style="left:676px;top:436px" width="6" height="10" viewBox="0 0 6 10"><path d="M0 0H6L3 10Z" fill="#111"/></svg>
<div class="a t" style="left:689px;top:437px;font-size:5px;color:#444">风向与风速</div>
<div class="a t" style="left:670px;top:447px;font-size:7px;font-weight:bold;color:#111;font-family:'Liberation Mono',monospace;letter-spacing:-0.3px">PM2.5 (μg/m^3)</div>
<div class="a" style="left:670px;top:458px;width:16px;height:8px;background:#006400"></div>
<div class="a t" style="left:689px;top:460px;font-size:4.6px;color:#444;letter-spacing:0.7px">优秀 (0 - 15)</div>
<div class="a" style="left:670px;top:469px;width:16px;height:8px;background:#78ae00"></div>
<div class="a t" style="left:689px;top:471px;font-size:4.6px;color:#444;letter-spacing:0.7px">中等 (15 - 40)</div>
<div class="a" style="left:670px;top:479px;width:16px;height:8px;background:#ffff00"></div>
<div class="a t" style="left:689px;top:481px;font-size:4.6px;color:#444;letter-spacing:0.7px">对敏感人群不利 (40 - 65)</div>
<div class="a" style="left:670px;top:490px;width:16px;height:8px;background:#ff9a10"></div>
<div class="a t" style="left:689px;top:492px;font-size:4.6px;color:#444;letter-spacing:0.7px">不健康 (65 - 150)</div>
<div class="a" style="left:670px;top:501px;width:16px;height:8px;background:#ff2010"></div>
<div class="a t" style="left:689px;top:503px;font-size:4.6px;color:#444;letter-spacing:0.7px">非常不健康 (150 - 250)</div>
</div>
</body></html>
